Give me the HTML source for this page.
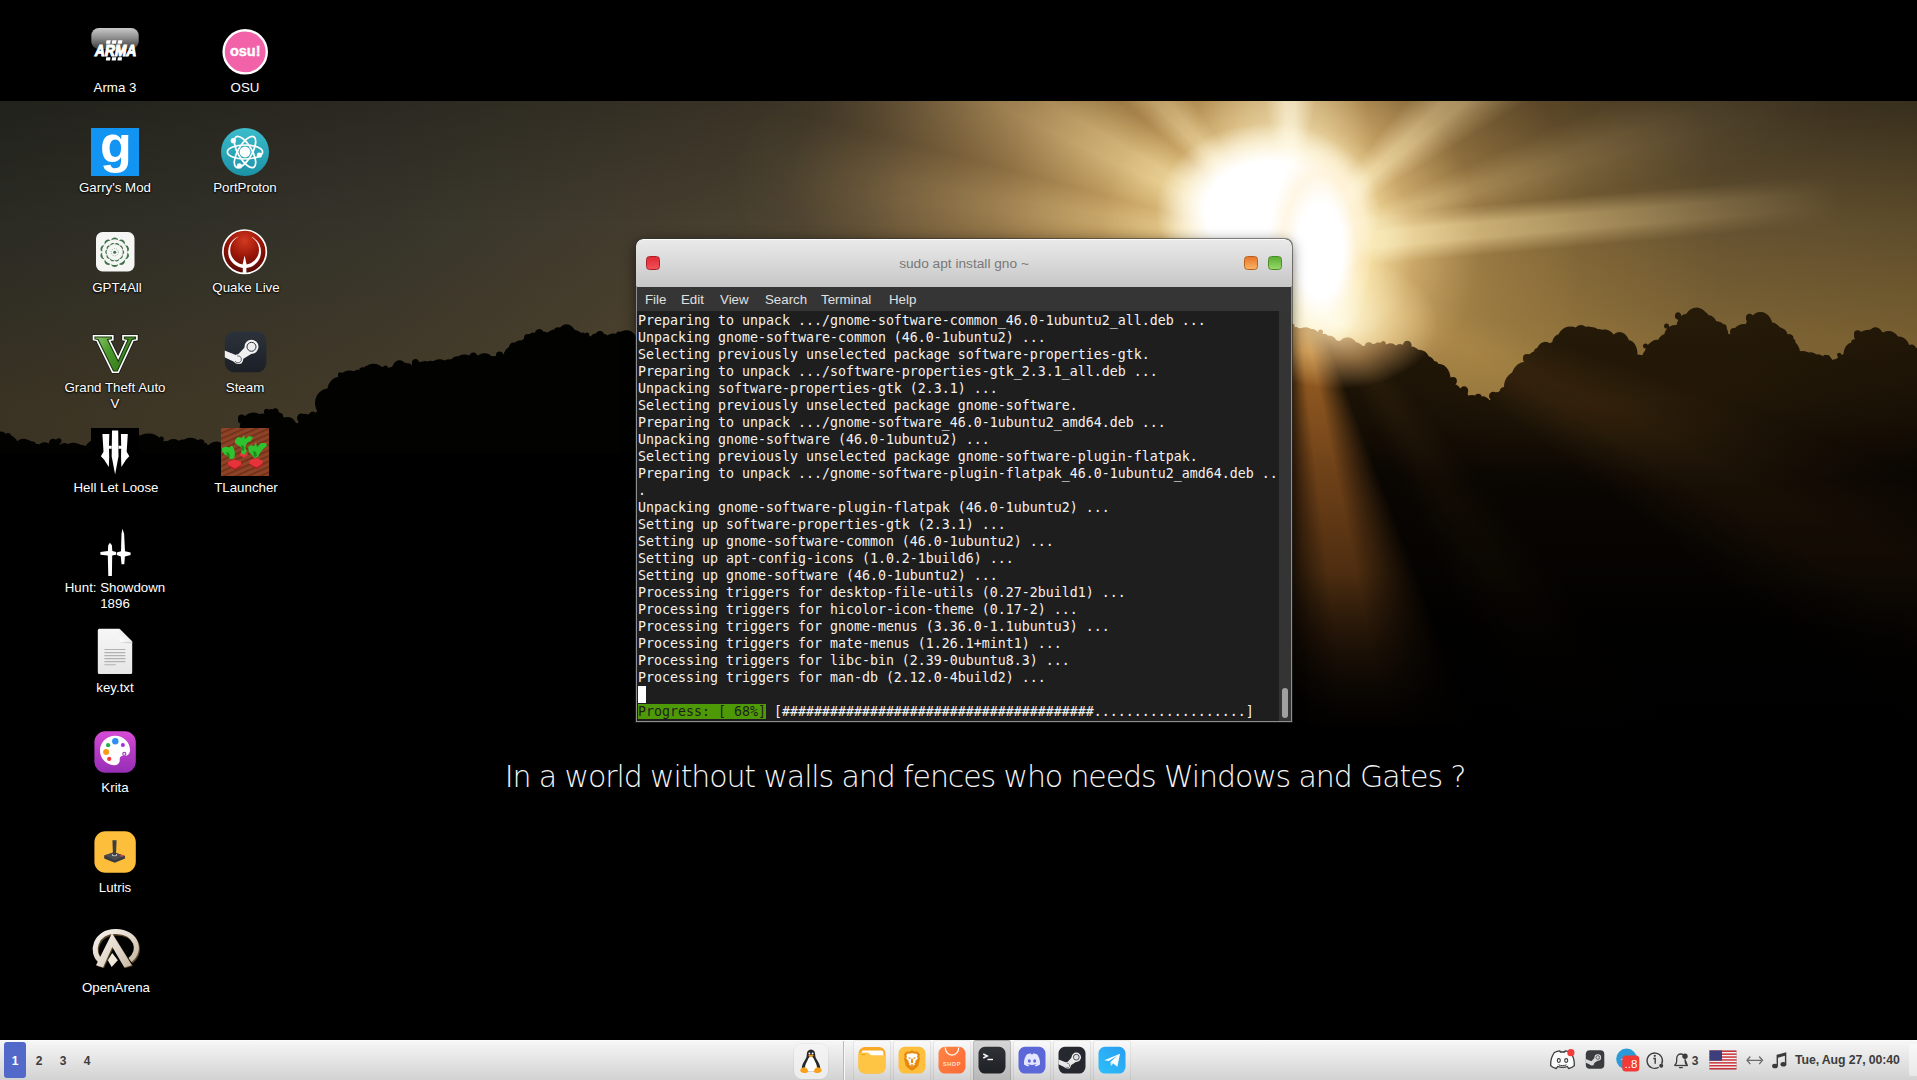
<!DOCTYPE html>
<html lang="en"><head><meta charset="utf-8"><title>Desktop</title>
<style>
*{box-sizing:border-box;margin:0;padding:0}
html,body{width:1917px;height:1080px;overflow:hidden;background:#000}
body{position:relative;font-family:"Liberation Sans","DejaVu Sans",sans-serif;color:#fff}
#photo{position:absolute;left:0;top:101px;width:1917px;height:624px;overflow:hidden;isolation:isolate}
.ly{position:absolute;left:0;top:0;width:1917px;height:624px}
.sc{mix-blend-mode:screen}
.quote{position:absolute;left:0;width:1917px;top:759px;text-align:center;font-family:"DejaVu Sans Light","DejaVu Sans","Liberation Sans",sans-serif;font-weight:200;font-size:30px;line-height:35px;color:#f4f4f4;letter-spacing:-1.11px;white-space:nowrap;padding-left:53px}
.di{position:absolute;width:130px;text-align:center;font-size:13.3px;line-height:16px;color:#fff;text-shadow:0 1px 2px #000,0 0 2px #000}
.di svg{text-shadow:none;display:block;margin:0 auto;width:48px;height:48px;overflow:visible}
.di span{display:block;margin-top:5px}
/* window */
#win{position:absolute;left:636px;top:239px;width:656px;height:483px;border-radius:7px 7px 0 0;box-shadow:0 3px 14px rgba(0,0,0,.55),0 0 0 1px rgba(60,60,60,.55);background:#1e1e1e;overflow:hidden}
#tb{position:absolute;left:0;top:0;width:656px;height:48px;background:linear-gradient(#e9e9e9,#dcdcdc 40%,#c6c6c6);border-top:1px solid #fafafa;border-radius:7px 7px 0 0;text-align:center;line-height:47px;font-size:13.7px;color:#787878}
.wb{position:absolute;top:16px;width:14px;height:14px;border-radius:3.5px}
#mb{position:absolute;left:0;top:48px;width:656px;height:24px;background:#353535;font-size:13.3px;color:#e0e0e0;line-height:26px;overflow:hidden;border-left:1px solid #555}
#mb span{position:absolute;top:0}
#term{position:absolute;left:1px;top:72px;width:642px;height:410px;background:#1e1e1e;font-family:"DejaVu Sans Mono","Liberation Mono",monospace;font-size:13.29px;line-height:17px;color:#f2f2f2;white-space:pre;padding:1px 0 0 1px;overflow:hidden}
#sb{position:absolute;left:643px;top:72px;width:12px;height:410px;background:#343434}
#sb i{position:absolute;left:3px;top:377px;width:6px;height:30px;border-radius:3px;background:#a0a0a0}
.pg{background:#4e9a06;color:#1e1e1e}
.cur{display:inline-block;width:8px;height:17px;background:#fff;vertical-align:top}
#wbd{position:absolute;left:0;top:47px;width:656px;height:436px;border:1px solid #8e8e8e;border-top:none;pointer-events:none}
/* panel */
#panel{position:absolute;left:0;top:1040px;width:1917px;height:40px;background:linear-gradient(#f6f6f6,#e6e6e6 45%,#d2d2d2);border-top:1px solid #fbfbfb}
.ws{position:absolute;top:13px;font-weight:bold;font-size:12px;color:#3c3c3c;width:24px;text-align:center;line-height:14px}
.ti{position:absolute;top:-1px;width:38px;height:41px;border:1px solid rgba(0,0,0,.07);border-bottom:none;border-radius:3px 3px 0 0;background:linear-gradient(rgba(255,255,255,.35),rgba(255,255,255,0))}
.ti svg,.tux svg{position:absolute;left:4px;top:5px;width:28px;height:28px}
.tray{position:absolute;top:-1px;height:40px}
#clock{position:absolute;left:1795px;top:11px;font-weight:bold;font-size:12.3px;color:#3c3c3c;line-height:16px;letter-spacing:-0.1px;white-space:nowrap}
</style></head><body>

<div id="photo">
<div class="ly" style="background:linear-gradient(90deg,#2b2b24 0,#36342a 20%,#473f2f 38%,#5c4b31 50%,#775a33 60%,#86663a 67%,#5e4b2b 78%,#50422a 90%,#483c25 100%)"></div>
<div class="ly" style="background:linear-gradient(180deg,rgba(0,0,0,.22) 0,rgba(0,0,0,0) 20%,rgba(150,100,30,.14) 50%)"></div>
<div class="ly sc" style="background:radial-gradient(circle at 1290px 144px,rgba(255,232,180,1) 0,rgba(255,216,146,.92) 80px,rgba(246,184,104,.62) 125px,rgba(216,148,68,.34) 190px,rgba(178,118,48,.14) 290px,rgba(160,110,50,0) 430px)"></div>
<div class="ly sc" style="background:radial-gradient(ellipse 340px 230px at 1130px 90px,rgba(240,172,88,.4) 0,rgba(214,146,66,.22) 50%,rgba(180,124,56,0) 100%)"></div>
<div class="ly sc" style="background:conic-gradient(from 270deg at 1290px 144px,rgba(0,0,0,0) 1.0deg,rgba(255,200,126,.22) 6.6deg,rgba(255,200,126,.22) 9.4deg,rgba(0,0,0,0) 15.0deg,rgba(0,0,0,0) 15.0deg,rgba(255,200,126,.5) 25.4deg,rgba(255,200,126,.5) 30.6deg,rgba(0,0,0,0) 40.0deg,rgba(0,0,0,0) 41.0deg,rgba(255,212,150,.36) 46.4deg,rgba(255,212,150,.36) 49.6deg,rgba(0,0,0,0) 56.0deg,rgba(0,0,0,0) 80.0deg,rgba(255,232,186,.6) 88.0deg,rgba(255,232,186,.6) 92.0deg,rgba(0,0,0,0) 100.0deg,rgba(0,0,0,0) 129.0deg,rgba(255,214,150,.5) 137.0deg,rgba(255,214,150,.5) 141.0deg,rgba(0,0,0,0) 149.0deg,rgba(0,0,0,0) 156.0deg,rgba(240,196,130,.24) 161.6deg,rgba(240,196,130,.24) 164.4deg,rgba(0,0,0,0) 170.0deg);-webkit-mask-image:radial-gradient(circle at 1290px 144px,#000 0,#000 120px,rgba(0,0,0,.55) 300px,transparent 560px);mask-image:radial-gradient(circle at 1290px 144px,#000 0,#000 120px,rgba(0,0,0,.55) 300px,transparent 560px)"></div>
<div class="sc" style="position:absolute;left:1322px;top:118px;width:520px;height:50px;transform-origin:0 50%;transform:rotate(-5deg);background:linear-gradient(180deg,rgba(255,224,160,0) 0,rgba(255,212,140,.6) 35%,rgba(255,212,140,.6) 65%,rgba(255,224,160,0) 100%);-webkit-mask-image:linear-gradient(90deg,transparent 0,#000 12%,rgba(0,0,0,.55) 55%,transparent 100%);mask-image:linear-gradient(90deg,transparent 0,#000 12%,rgba(0,0,0,.55) 55%,transparent 100%)"></div>
<div class="ly sc" style="background:radial-gradient(ellipse 90px 170px at 1284px 70px,rgba(255,238,196,.55) 0,rgba(255,226,170,.3) 55%,rgba(255,220,160,0) 100%)"></div>
<div class="ly" style="background:radial-gradient(ellipse 112px 88px at 1268px 110px,#fff 0,#fff 56%,rgba(255,250,232,.7) 76%,rgba(255,240,210,0) 100%)"></div>
<div class="ly" style="background:radial-gradient(ellipse 52px 106px at 1320px 150px,#fff 0,#fff 45%,rgba(255,240,210,.6) 72%,rgba(255,230,190,0) 100%)"></div>
<div class="ly sc" style="background:linear-gradient(180deg,rgba(0,0,0,0) 10px,rgba(170,120,40,.34) 235px);-webkit-mask-image:linear-gradient(90deg,transparent 1340px,#000 1560px);mask-image:linear-gradient(90deg,transparent 1340px,#000 1560px)"></div>
<svg class="ly" width="1917" height="624" viewBox="0 0 1917 624">
<defs>
<linearGradient id="treeR" gradientUnits="userSpaceOnUse" x1="0" y1="190" x2="0" y2="624">
<stop offset="0" stop-color="#2a1e0a"/><stop offset="0.16" stop-color="#1c1306"/><stop offset="0.42" stop-color="#0a0602"/><stop offset="0.8" stop-color="#020100"/>
</linearGradient>
</defs>
<path d="M0 624 L0 340 L20 345 L44 351 L46 344 L60 344 L62 352 L87 355 L120 348 L147 343 L174 348 L194 346 L220 355 L240 340 L257 321 L270 315 L284 326 L294 331 L310 322 L320 318 L326 300 L334 288 L346 280 L360 275 L380 274 L400 271 L420 268 L444 271 L460 262 L474 258 L488 264 L500 263 L510 254 L520 248 L536 240 L551 236 L570 239 L587 238 L610 241 L640 240 L700 238 L800 243 L900 238 L1000 243 L1100 238 L1200 243 L1300 238 L1300 624 ZM-13 343a8 11 0 1 1 15 0a8 11 0 1 1 -15 0zM-7 335a2.1 2.1 0 1 1 4.3 0a2.1 2.1 0 1 1 -4.3 0zM-8 337a3.1 3.1 0 1 1 6.2 0a3.1 3.1 0 1 1 -6.2 0zM-7 342a7 10 0 1 1 14 0a7 10 0 1 1 -14 0zM-8 334a4.4 4.4 0 1 1 8.7 0a4.4 4.4 0 1 1 -8.7 0zM-3 335a4.4 4.4 0 1 1 8.9 0a4.4 4.4 0 1 1 -8.9 0zM-6 346a12 13 0 1 1 24 0a12 13 0 1 1 -24 0zM-1 335a2.5 2.5 0 1 1 4.9 0a2.5 2.5 0 1 1 -4.9 0zM5 335a2.9 2.9 0 1 1 5.9 0a2.9 2.9 0 1 1 -5.9 0zM8 346a6 7 0 1 1 12 0a6 7 0 1 1 -12 0zM10 341a3.5 3.5 0 1 1 6.9 0a3.5 3.5 0 1 1 -6.9 0zM9 341a4.0 4.0 0 1 1 8.0 0a4.0 4.0 0 1 1 -8.0 0zM15 351a9 10 0 1 1 17 0a9 10 0 1 1 -17 0zM23 344a4.5 4.5 0 1 1 8.9 0a4.5 4.5 0 1 1 -8.9 0zM13 344a3.9 3.9 0 1 1 7.8 0a3.9 3.9 0 1 1 -7.8 0zM21 354a8 13 0 1 1 17 0a8 13 0 1 1 -17 0zM28 343a2.8 2.8 0 1 1 5.6 0a2.8 2.8 0 1 1 -5.6 0zM29 344a3.4 3.4 0 1 1 6.9 0a3.4 3.4 0 1 1 -6.9 0zM22 358a15 15 0 1 1 30 0a15 15 0 1 1 -30 0zM20 345a3.6 3.6 0 1 1 7.2 0a3.6 3.6 0 1 1 -7.2 0zM49 344a2.7 2.7 0 1 1 5.4 0a2.7 2.7 0 1 1 -5.4 0zM35 356a9 14 0 1 1 19 0a9 14 0 1 1 -19 0zM33 348a3.9 3.9 0 1 1 7.8 0a3.9 3.9 0 1 1 -7.8 0zM34 347a3.0 3.0 0 1 1 6.0 0a3.0 3.0 0 1 1 -6.0 0zM47 348a7 9 0 1 1 14 0a7 9 0 1 1 -14 0zM56 340a2.7 2.7 0 1 1 5.4 0a2.7 2.7 0 1 1 -5.4 0zM49 342a4.2 4.2 0 1 1 8.4 0a4.2 4.2 0 1 1 -8.4 0zM58 353a7 8 0 1 1 13 0a7 8 0 1 1 -13 0zM62 347a2.7 2.7 0 1 1 5.3 0a2.7 2.7 0 1 1 -5.3 0zM56 347a2.9 2.9 0 1 1 5.8 0a2.9 2.9 0 1 1 -5.8 0zM59 363a15 17 0 1 1 29 0a15 17 0 1 1 -29 0zM74 353a4.2 4.2 0 1 1 8.5 0a4.2 4.2 0 1 1 -8.5 0zM78 348a4.0 4.0 0 1 1 8.0 0a4.0 4.0 0 1 1 -8.0 0zM73 358a8 12 0 1 1 16 0a8 12 0 1 1 -16 0zM72 350a2.4 2.4 0 1 1 4.8 0a2.4 2.4 0 1 1 -4.8 0zM76 351a2.0 2.0 0 1 1 4.0 0a2.0 2.0 0 1 1 -4.0 0zM80 358a7 7 0 1 1 14 0a7 7 0 1 1 -14 0zM86 353a2.6 2.6 0 1 1 5.3 0a2.6 2.6 0 1 1 -5.3 0zM82 353a2.3 2.3 0 1 1 4.6 0a2.3 2.3 0 1 1 -4.6 0zM83 360a14 17 0 1 1 27 0a14 17 0 1 1 -27 0zM83 349a2.7 2.7 0 1 1 5.3 0a2.7 2.7 0 1 1 -5.3 0zM104 350a2.1 2.1 0 1 1 4.1 0a2.1 2.1 0 1 1 -4.1 0zM99 355a9 13 0 1 1 18 0a9 13 0 1 1 -18 0zM104 343a4.2 4.2 0 1 1 8.3 0a4.2 4.2 0 1 1 -8.3 0zM108 346a2.9 2.9 0 1 1 5.8 0a2.9 2.9 0 1 1 -5.8 0zM101 358a12 16 0 1 1 25 0a12 16 0 1 1 -25 0zM102 343a4.5 4.5 0 1 1 8.9 0a4.5 4.5 0 1 1 -8.9 0zM118 343a4.0 4.0 0 1 1 8.1 0a4.0 4.0 0 1 1 -8.1 0zM115 348a8 9 0 1 1 16 0a8 9 0 1 1 -16 0zM113 342a2.6 2.6 0 1 1 5.3 0a2.6 2.6 0 1 1 -5.3 0zM123 340a3.1 3.1 0 1 1 6.2 0a3.1 3.1 0 1 1 -6.2 0zM117 353a16 16 0 1 1 32 0a16 16 0 1 1 -32 0zM122 343a2.5 2.5 0 1 1 5.0 0a2.5 2.5 0 1 1 -5.0 0zM134 338a4.1 4.1 0 1 1 8.2 0a4.1 4.1 0 1 1 -8.2 0zM129 349a13 11 0 1 1 25 0a13 11 0 1 1 -25 0zM148 340a3.9 3.9 0 1 1 7.8 0a3.9 3.9 0 1 1 -7.8 0zM137 342a4.0 4.0 0 1 1 7.9 0a4.0 4.0 0 1 1 -7.9 0zM134 350a15 14 0 1 1 29 0a15 14 0 1 1 -29 0zM159 338a2.4 2.4 0 1 1 4.9 0a2.4 2.4 0 1 1 -4.9 0zM133 341a4.3 4.3 0 1 1 8.5 0a4.3 4.3 0 1 1 -8.5 0zM150 350a8 11 0 1 1 17 0a8 11 0 1 1 -17 0zM153 342a2.3 2.3 0 1 1 4.7 0a2.3 2.3 0 1 1 -4.7 0zM146 340a3.6 3.6 0 1 1 7.2 0a3.6 3.6 0 1 1 -7.2 0zM153 359a13 19 0 1 1 26 0a13 19 0 1 1 -26 0zM156 347a2.7 2.7 0 1 1 5.5 0a2.7 2.7 0 1 1 -5.5 0zM157 344a2.6 2.6 0 1 1 5.3 0a2.6 2.6 0 1 1 -5.3 0zM165 350a9 9 0 1 1 17 0a9 9 0 1 1 -17 0zM172 342a3.1 3.1 0 1 1 6.1 0a3.1 3.1 0 1 1 -6.1 0zM178 344a3.3 3.3 0 1 1 6.7 0a3.3 3.3 0 1 1 -6.7 0zM176 346a6 7 0 1 1 13 0a6 7 0 1 1 -13 0zM183 342a3.2 3.2 0 1 1 6.4 0a3.2 3.2 0 1 1 -6.4 0zM182 341a2.8 2.8 0 1 1 5.6 0a2.8 2.8 0 1 1 -5.6 0zM179 351a12 11 0 1 1 23 0a12 11 0 1 1 -23 0zM180 344a3.9 3.9 0 1 1 7.9 0a3.9 3.9 0 1 1 -7.9 0zM187 342a3.9 3.9 0 1 1 7.8 0a3.9 3.9 0 1 1 -7.8 0zM191 353a10 12 0 1 1 20 0a10 12 0 1 1 -20 0zM201 345a3.3 3.3 0 1 1 6.7 0a3.3 3.3 0 1 1 -6.7 0zM197 342a3.7 3.7 0 1 1 7.5 0a3.7 3.7 0 1 1 -7.5 0zM199 363a12 17 0 1 1 24 0a12 17 0 1 1 -24 0zM217 353a2.3 2.3 0 1 1 4.6 0a2.3 2.3 0 1 1 -4.6 0zM207 353a2.6 2.6 0 1 1 5.2 0a2.6 2.6 0 1 1 -5.2 0zM204 361a13 16 0 1 1 25 0a13 16 0 1 1 -25 0zM220 348a2.4 2.4 0 1 1 4.7 0a2.4 2.4 0 1 1 -4.7 0zM224 346a2.5 2.5 0 1 1 5.1 0a2.5 2.5 0 1 1 -5.1 0zM218 358a9 14 0 1 1 19 0a9 14 0 1 1 -19 0zM218 348a3.3 3.3 0 1 1 6.6 0a3.3 3.3 0 1 1 -6.6 0zM221 349a2.8 2.8 0 1 1 5.6 0a2.8 2.8 0 1 1 -5.6 0zM230 342a7 8 0 1 1 14 0a7 8 0 1 1 -14 0zM231 336a3.3 3.3 0 1 1 6.6 0a3.3 3.3 0 1 1 -6.6 0zM227 335a4.0 4.0 0 1 1 7.9 0a4.0 4.0 0 1 1 -7.9 0zM241 334a7 7 0 1 1 13 0a7 7 0 1 1 -13 0zM241 330a3.1 3.1 0 1 1 6.1 0a3.1 3.1 0 1 1 -6.1 0zM250 328a2.6 2.6 0 1 1 5.3 0a2.6 2.6 0 1 1 -5.3 0zM240 333a14 17 0 1 1 27 0a14 17 0 1 1 -27 0zM238 319a3.1 3.1 0 1 1 6.1 0a3.1 3.1 0 1 1 -6.1 0zM238 317a3.6 3.6 0 1 1 7.2 0a3.6 3.6 0 1 1 -7.2 0zM255 321a8 7 0 1 1 16 0a8 7 0 1 1 -16 0zM259 316a3.4 3.4 0 1 1 6.8 0a3.4 3.4 0 1 1 -6.8 0zM268 316a2.3 2.3 0 1 1 4.6 0a2.3 2.3 0 1 1 -4.6 0zM264 317a7 9 0 1 1 14 0a7 9 0 1 1 -14 0zM264 311a2.8 2.8 0 1 1 5.5 0a2.8 2.8 0 1 1 -5.5 0zM272 311a3.3 3.3 0 1 1 6.5 0a3.3 3.3 0 1 1 -6.5 0zM270 322a7 10 0 1 1 15 0a7 10 0 1 1 -15 0zM278 315a2.5 2.5 0 1 1 4.9 0a2.5 2.5 0 1 1 -4.9 0zM275 313a2.3 2.3 0 1 1 4.5 0a2.3 2.3 0 1 1 -4.5 0zM278 333a10 13 0 1 1 19 0a10 13 0 1 1 -19 0zM283 322a4.5 4.5 0 1 1 8.9 0a4.5 4.5 0 1 1 -8.9 0zM280 322a3.8 3.8 0 1 1 7.5 0a3.8 3.8 0 1 1 -7.5 0zM287 331a9 9 0 1 1 18 0a9 9 0 1 1 -18 0zM286 323a2.6 2.6 0 1 1 5.3 0a2.6 2.6 0 1 1 -5.3 0zM286 326a4.1 4.1 0 1 1 8.2 0a4.1 4.1 0 1 1 -8.2 0zM296 329a10 12 0 1 1 21 0a10 12 0 1 1 -21 0zM302 321a3.1 3.1 0 1 1 6.2 0a3.1 3.1 0 1 1 -6.2 0zM297 317a4.4 4.4 0 1 1 8.9 0a4.4 4.4 0 1 1 -8.9 0zM305 323a10 9 0 1 1 19 0a10 9 0 1 1 -19 0zM302 316a3.2 3.2 0 1 1 6.4 0a3.2 3.2 0 1 1 -6.4 0zM311 317a3.3 3.3 0 1 1 6.5 0a3.3 3.3 0 1 1 -6.5 0zM312 320a7 10 0 1 1 14 0a7 10 0 1 1 -14 0zM310 313a2.6 2.6 0 1 1 5.2 0a2.6 2.6 0 1 1 -5.2 0zM317 312a3.9 3.9 0 1 1 7.8 0a3.9 3.9 0 1 1 -7.8 0zM315 302a13 14 0 1 1 27 0a13 14 0 1 1 -27 0zM338 294a3.8 3.8 0 1 1 7.6 0a3.8 3.8 0 1 1 -7.6 0zM328 294a4.1 4.1 0 1 1 8.2 0a4.1 4.1 0 1 1 -8.2 0zM327 291a12 15 0 1 1 24 0a12 15 0 1 1 -24 0zM335 280a4.1 4.1 0 1 1 8.2 0a4.1 4.1 0 1 1 -8.2 0zM343 278a3.5 3.5 0 1 1 6.9 0a3.5 3.5 0 1 1 -6.9 0zM337 283a12 13 0 1 1 25 0a12 13 0 1 1 -25 0zM338 274a2.3 2.3 0 1 1 4.5 0a2.3 2.3 0 1 1 -4.5 0zM354 273a3.6 3.6 0 1 1 7.1 0a3.6 3.6 0 1 1 -7.1 0zM346 281a11 11 0 1 1 23 0a11 11 0 1 1 -23 0zM360 273a3.3 3.3 0 1 1 6.7 0a3.3 3.3 0 1 1 -6.7 0zM358 275a3.8 3.8 0 1 1 7.7 0a3.8 3.8 0 1 1 -7.7 0zM358 277a6 9 0 1 1 13 0a6 9 0 1 1 -13 0zM364 268a3.2 3.2 0 1 1 6.5 0a3.2 3.2 0 1 1 -6.5 0zM359 270a3.7 3.7 0 1 1 7.4 0a3.7 3.7 0 1 1 -7.4 0zM362 277a12 11 0 1 1 23 0a12 11 0 1 1 -23 0zM366 268a2.8 2.8 0 1 1 5.5 0a2.8 2.8 0 1 1 -5.5 0zM373 271a2.2 2.2 0 1 1 4.3 0a2.2 2.2 0 1 1 -4.3 0zM368 281a12 15 0 1 1 25 0a12 15 0 1 1 -25 0zM378 270a3.2 3.2 0 1 1 6.3 0a3.2 3.2 0 1 1 -6.3 0zM369 267a2.5 2.5 0 1 1 5.0 0a2.5 2.5 0 1 1 -5.0 0zM381 282a11 16 0 1 1 22 0a11 16 0 1 1 -22 0zM399 270a2.7 2.7 0 1 1 5.3 0a2.7 2.7 0 1 1 -5.3 0zM383 267a2.5 2.5 0 1 1 5.1 0a2.5 2.5 0 1 1 -5.1 0zM392 274a8 11 0 1 1 15 0a8 11 0 1 1 -15 0zM401 266a4.2 4.2 0 1 1 8.4 0a4.2 4.2 0 1 1 -8.4 0zM399 267a4.2 4.2 0 1 1 8.5 0a4.2 4.2 0 1 1 -8.5 0zM403 271a5 8 0 1 1 11 0a5 8 0 1 1 -11 0zM403 267a2.9 2.9 0 1 1 5.7 0a2.9 2.9 0 1 1 -5.7 0zM404 264a2.0 2.0 0 1 1 4.0 0a2.0 2.0 0 1 1 -4.0 0zM407 280a11 18 0 1 1 22 0a11 18 0 1 1 -22 0zM423 268a2.9 2.9 0 1 1 5.9 0a2.9 2.9 0 1 1 -5.9 0zM412 262a3.5 3.5 0 1 1 6.9 0a3.5 3.5 0 1 1 -6.9 0zM416 270a9 10 0 1 1 18 0a9 10 0 1 1 -18 0zM426 264a4.3 4.3 0 1 1 8.7 0a4.3 4.3 0 1 1 -8.7 0zM417 264a3.3 3.3 0 1 1 6.6 0a3.3 3.3 0 1 1 -6.6 0zM420 277a11 13 0 1 1 22 0a11 13 0 1 1 -22 0zM429 265a4.4 4.4 0 1 1 8.7 0a4.4 4.4 0 1 1 -8.7 0zM430 266a2.1 2.1 0 1 1 4.2 0a2.1 2.1 0 1 1 -4.2 0zM429 275a11 13 0 1 1 21 0a11 13 0 1 1 -21 0zM428 264a2.3 2.3 0 1 1 4.6 0a2.3 2.3 0 1 1 -4.6 0zM437 267a2.7 2.7 0 1 1 5.5 0a2.7 2.7 0 1 1 -5.5 0zM437 277a12 18 0 1 1 25 0a12 18 0 1 1 -25 0zM449 265a2.4 2.4 0 1 1 4.8 0a2.4 2.4 0 1 1 -4.8 0zM437 266a4.3 4.3 0 1 1 8.5 0a4.3 4.3 0 1 1 -8.5 0zM448 268a9 12 0 1 1 19 0a9 12 0 1 1 -19 0zM449 261a2.2 2.2 0 1 1 4.5 0a2.2 2.2 0 1 1 -4.5 0zM452 261a2.6 2.6 0 1 1 5.2 0a2.6 2.6 0 1 1 -5.2 0zM452 268a12 14 0 1 1 25 0a12 14 0 1 1 -25 0zM459 257a2.9 2.9 0 1 1 5.9 0a2.9 2.9 0 1 1 -5.9 0zM457 259a2.7 2.7 0 1 1 5.4 0a2.7 2.7 0 1 1 -5.4 0zM467 263a7 9 0 1 1 15 0a7 9 0 1 1 -15 0zM468 257a2.6 2.6 0 1 1 5.2 0a2.6 2.6 0 1 1 -5.2 0zM469 256a4.4 4.4 0 1 1 8.8 0a4.4 4.4 0 1 1 -8.8 0zM474 269a11 13 0 1 1 21 0a11 13 0 1 1 -21 0zM490 260a3.5 3.5 0 1 1 6.9 0a3.5 3.5 0 1 1 -6.9 0zM470 260a4.3 4.3 0 1 1 8.6 0a4.3 4.3 0 1 1 -8.6 0zM480 269a15 14 0 1 1 30 0a15 14 0 1 1 -30 0zM481 258a3.7 3.7 0 1 1 7.4 0a3.7 3.7 0 1 1 -7.4 0zM505 257a3.6 3.6 0 1 1 7.2 0a3.6 3.6 0 1 1 -7.2 0zM494 263a10 10 0 1 1 20 0a10 10 0 1 1 -20 0zM496 254a3.6 3.6 0 1 1 7.2 0a3.6 3.6 0 1 1 -7.2 0zM498 257a2.6 2.6 0 1 1 5.3 0a2.6 2.6 0 1 1 -5.3 0zM503 257a10 12 0 1 1 20 0a10 12 0 1 1 -20 0zM512 249a2.6 2.6 0 1 1 5.1 0a2.6 2.6 0 1 1 -5.1 0zM513 251a2.8 2.8 0 1 1 5.5 0a2.8 2.8 0 1 1 -5.5 0zM507 259a14 19 0 1 1 29 0a14 19 0 1 1 -29 0zM509 246a4.4 4.4 0 1 1 8.8 0a4.4 4.4 0 1 1 -8.8 0zM525 246a2.1 2.1 0 1 1 4.1 0a2.1 2.1 0 1 1 -4.1 0zM518 250a11 13 0 1 1 22 0a11 13 0 1 1 -22 0zM536 242a2.1 2.1 0 1 1 4.2 0a2.1 2.1 0 1 1 -4.2 0zM522 241a3.7 3.7 0 1 1 7.4 0a3.7 3.7 0 1 1 -7.4 0zM522 247a13 15 0 1 1 27 0a13 15 0 1 1 -27 0zM544 237a4.1 4.1 0 1 1 8.1 0a4.1 4.1 0 1 1 -8.1 0zM524 237a3.9 3.9 0 1 1 7.8 0a3.9 3.9 0 1 1 -7.8 0zM529 245a13 14 0 1 1 27 0a13 14 0 1 1 -27 0zM535 233a4.4 4.4 0 1 1 8.7 0a4.4 4.4 0 1 1 -8.7 0zM530 234a2.5 2.5 0 1 1 5.1 0a2.5 2.5 0 1 1 -5.1 0zM547 237a6 8 0 1 1 12 0a6 8 0 1 1 -12 0zM554 230a3.8 3.8 0 1 1 7.7 0a3.8 3.8 0 1 1 -7.7 0zM556 230a2.8 2.8 0 1 1 5.6 0a2.8 2.8 0 1 1 -5.6 0zM544 244a15 13 0 1 1 29 0a15 13 0 1 1 -29 0zM553 235a2.8 2.8 0 1 1 5.7 0a2.8 2.8 0 1 1 -5.7 0zM547 237a2.7 2.7 0 1 1 5.4 0a2.7 2.7 0 1 1 -5.4 0zM555 249a12 20 0 1 1 23 0a12 20 0 1 1 -23 0zM559 232a4.1 4.1 0 1 1 8.1 0a4.1 4.1 0 1 1 -8.1 0zM561 238a3.2 3.2 0 1 1 6.4 0a3.2 3.2 0 1 1 -6.4 0zM562 248a12 15 0 1 1 23 0a12 15 0 1 1 -23 0zM558 237a4.0 4.0 0 1 1 8.1 0a4.0 4.0 0 1 1 -8.1 0zM578 240a2.1 2.1 0 1 1 4.2 0a2.1 2.1 0 1 1 -4.2 0zM567 250a12 18 0 1 1 24 0a12 18 0 1 1 -24 0zM570 238a4.4 4.4 0 1 1 8.8 0a4.4 4.4 0 1 1 -8.8 0zM578 239a3.8 3.8 0 1 1 7.6 0a3.8 3.8 0 1 1 -7.6 0zM579 244a7 11 0 1 1 14 0a7 11 0 1 1 -14 0zM585 234a2.1 2.1 0 1 1 4.1 0a2.1 2.1 0 1 1 -4.1 0zM578 236a4.4 4.4 0 1 1 8.8 0a4.4 4.4 0 1 1 -8.8 0zM588 244a8 11 0 1 1 17 0a8 11 0 1 1 -17 0zM600 237a4.0 4.0 0 1 1 8.0 0a4.0 4.0 0 1 1 -8.0 0zM596 234a3.9 3.9 0 1 1 7.9 0a3.9 3.9 0 1 1 -7.9 0zM597 245a8 10 0 1 1 17 0a8 10 0 1 1 -17 0zM594 239a3.9 3.9 0 1 1 7.8 0a3.9 3.9 0 1 1 -7.8 0zM599 239a2.1 2.1 0 1 1 4.2 0a2.1 2.1 0 1 1 -4.2 0zM603 248a11 12 0 1 1 21 0a11 12 0 1 1 -21 0zM606 241a2.2 2.2 0 1 1 4.5 0a2.2 2.2 0 1 1 -4.5 0zM610 238a3.1 3.1 0 1 1 6.2 0a3.1 3.1 0 1 1 -6.2 0zM610 247a10 12 0 1 1 20 0a10 12 0 1 1 -20 0zM624 237a2.3 2.3 0 1 1 4.6 0a2.3 2.3 0 1 1 -4.6 0zM623 239a3.4 3.4 0 1 1 6.8 0a3.4 3.4 0 1 1 -6.8 0zM616 246a11 13 0 1 1 21 0a11 13 0 1 1 -21 0zM616 234a3.4 3.4 0 1 1 6.9 0a3.4 3.4 0 1 1 -6.9 0zM619 236a4.5 4.5 0 1 1 9.0 0a4.5 4.5 0 1 1 -9.0 0zM626 246a9 11 0 1 1 18 0a9 11 0 1 1 -18 0zM624 238a4.0 4.0 0 1 1 8.1 0a4.0 4.0 0 1 1 -8.1 0zM639 236a2.1 2.1 0 1 1 4.2 0a2.1 2.1 0 1 1 -4.2 0zM635 244a6 11 0 1 1 13 0a6 11 0 1 1 -13 0zM643 237a4.2 4.2 0 1 1 8.3 0a4.2 4.2 0 1 1 -8.3 0zM637 237a3.9 3.9 0 1 1 7.9 0a3.9 3.9 0 1 1 -7.9 0zM645 241a8 9 0 1 1 15 0a8 9 0 1 1 -15 0zM648 236a2.5 2.5 0 1 1 5.0 0a2.5 2.5 0 1 1 -5.0 0zM645 234a3.6 3.6 0 1 1 7.3 0a3.6 3.6 0 1 1 -7.3 0zM653 240a6 9 0 1 1 12 0a6 9 0 1 1 -12 0zM652 235a4.0 4.0 0 1 1 8.0 0a4.0 4.0 0 1 1 -8.0 0zM657 235a2.3 2.3 0 1 1 4.5 0a2.3 2.3 0 1 1 -4.5 0zM655 242a11 11 0 1 1 22 0a11 11 0 1 1 -22 0zM668 234a2.7 2.7 0 1 1 5.4 0a2.7 2.7 0 1 1 -5.4 0zM659 232a2.8 2.8 0 1 1 5.6 0a2.8 2.8 0 1 1 -5.6 0zM666 247a9 13 0 1 1 18 0a9 13 0 1 1 -18 0zM668 239a3.8 3.8 0 1 1 7.6 0a3.8 3.8 0 1 1 -7.6 0zM665 240a4.3 4.3 0 1 1 8.5 0a4.3 4.3 0 1 1 -8.5 0zM670 248a12 18 0 1 1 24 0a12 18 0 1 1 -24 0zM670 239a3.4 3.4 0 1 1 6.8 0a3.4 3.4 0 1 1 -6.8 0zM683 232a2.2 2.2 0 1 1 4.4 0a2.2 2.2 0 1 1 -4.4 0zM681 241a9 10 0 1 1 18 0a9 10 0 1 1 -18 0zM689 232a2.3 2.3 0 1 1 4.5 0a2.3 2.3 0 1 1 -4.5 0zM686 232a4.4 4.4 0 1 1 8.8 0a4.4 4.4 0 1 1 -8.8 0zM688 242a9 11 0 1 1 17 0a9 11 0 1 1 -17 0zM686 232a3.0 3.0 0 1 1 5.9 0a3.0 3.0 0 1 1 -5.9 0zM700 234a4.1 4.1 0 1 1 8.1 0a4.1 4.1 0 1 1 -8.1 0zM692 247a11 14 0 1 1 22 0a11 14 0 1 1 -22 0zM708 238a2.5 2.5 0 1 1 5.1 0a2.5 2.5 0 1 1 -5.1 0zM698 236a3.0 3.0 0 1 1 5.9 0a3.0 3.0 0 1 1 -5.9 0zM700 242a9 12 0 1 1 18 0a9 12 0 1 1 -18 0zM708 232a2.1 2.1 0 1 1 4.2 0a2.1 2.1 0 1 1 -4.2 0zM711 235a3.5 3.5 0 1 1 7.0 0a3.5 3.5 0 1 1 -7.0 0zM707 245a10 13 0 1 1 21 0a10 13 0 1 1 -21 0zM712 235a3.1 3.1 0 1 1 6.2 0a3.1 3.1 0 1 1 -6.2 0zM712 238a3.5 3.5 0 1 1 7.1 0a3.5 3.5 0 1 1 -7.1 0zM716 244a9 11 0 1 1 18 0a9 11 0 1 1 -18 0zM717 235a2.3 2.3 0 1 1 4.5 0a2.3 2.3 0 1 1 -4.5 0zM716 235a2.2 2.2 0 1 1 4.5 0a2.2 2.2 0 1 1 -4.5 0zM724 244a8 13 0 1 1 17 0a8 13 0 1 1 -17 0zM733 233a3.3 3.3 0 1 1 6.6 0a3.3 3.3 0 1 1 -6.6 0zM722 234a2.9 2.9 0 1 1 5.9 0a2.9 2.9 0 1 1 -5.9 0zM735 245a8 11 0 1 1 17 0a8 11 0 1 1 -17 0zM744 239a4.5 4.5 0 1 1 8.9 0a4.5 4.5 0 1 1 -8.9 0zM739 235a4.3 4.3 0 1 1 8.6 0a4.3 4.3 0 1 1 -8.6 0zM735 245a14 12 0 1 1 29 0a14 12 0 1 1 -29 0zM752 238a4.2 4.2 0 1 1 8.5 0a4.2 4.2 0 1 1 -8.5 0zM740 235a2.4 2.4 0 1 1 4.7 0a2.4 2.4 0 1 1 -4.7 0zM745 248a12 15 0 1 1 24 0a12 15 0 1 1 -24 0zM750 240a2.5 2.5 0 1 1 4.9 0a2.5 2.5 0 1 1 -4.9 0zM746 235a3.7 3.7 0 1 1 7.4 0a3.7 3.7 0 1 1 -7.4 0zM759 243a9 8 0 1 1 17 0a9 8 0 1 1 -17 0zM766 238a4.2 4.2 0 1 1 8.4 0a4.2 4.2 0 1 1 -8.4 0zM764 237a4.2 4.2 0 1 1 8.4 0a4.2 4.2 0 1 1 -8.4 0zM759 252a15 16 0 1 1 29 0a15 16 0 1 1 -29 0zM763 236a3.4 3.4 0 1 1 6.9 0a3.4 3.4 0 1 1 -6.9 0zM766 238a3.1 3.1 0 1 1 6.2 0a3.1 3.1 0 1 1 -6.2 0zM769 250a10 16 0 1 1 20 0a10 16 0 1 1 -20 0zM779 234a3.5 3.5 0 1 1 6.9 0a3.5 3.5 0 1 1 -6.9 0zM781 239a2.0 2.0 0 1 1 4.0 0a2.0 2.0 0 1 1 -4.0 0zM777 245a8 9 0 1 1 16 0a8 9 0 1 1 -16 0zM788 239a2.6 2.6 0 1 1 5.1 0a2.6 2.6 0 1 1 -5.1 0zM785 240a2.0 2.0 0 1 1 4.0 0a2.0 2.0 0 1 1 -4.0 0zM785 245a7 8 0 1 1 14 0a7 8 0 1 1 -14 0zM789 240a3.6 3.6 0 1 1 7.1 0a3.6 3.6 0 1 1 -7.1 0zM787 240a4.3 4.3 0 1 1 8.7 0a4.3 4.3 0 1 1 -8.7 0zM792 248a6 10 0 1 1 13 0a6 10 0 1 1 -13 0zM799 241a2.7 2.7 0 1 1 5.3 0a2.7 2.7 0 1 1 -5.3 0zM788 240a3.4 3.4 0 1 1 6.8 0a3.4 3.4 0 1 1 -6.8 0zM794 252a11 16 0 1 1 22 0a11 16 0 1 1 -22 0zM798 238a2.1 2.1 0 1 1 4.2 0a2.1 2.1 0 1 1 -4.2 0zM803 241a2.6 2.6 0 1 1 5.2 0a2.6 2.6 0 1 1 -5.2 0zM801 252a10 15 0 1 1 20 0a10 15 0 1 1 -20 0zM800 243a3.5 3.5 0 1 1 7.0 0a3.5 3.5 0 1 1 -7.0 0zM807 240a4.0 4.0 0 1 1 8.1 0a4.0 4.0 0 1 1 -8.1 0zM808 246a8 9 0 1 1 16 0a8 9 0 1 1 -16 0zM819 239a2.0 2.0 0 1 1 4.0 0a2.0 2.0 0 1 1 -4.0 0zM819 239a3.2 3.2 0 1 1 6.3 0a3.2 3.2 0 1 1 -6.3 0zM817 244a9 10 0 1 1 18 0a9 10 0 1 1 -18 0zM814 237a3.9 3.9 0 1 1 7.7 0a3.9 3.9 0 1 1 -7.7 0zM826 235a3.8 3.8 0 1 1 7.6 0a3.8 3.8 0 1 1 -7.6 0zM822 249a10 14 0 1 1 21 0a10 14 0 1 1 -21 0zM823 237a4.4 4.4 0 1 1 8.8 0a4.4 4.4 0 1 1 -8.8 0zM825 236a2.0 2.0 0 1 1 4.1 0a2.0 2.0 0 1 1 -4.1 0zM830 247a9 12 0 1 1 18 0a9 12 0 1 1 -18 0zM833 236a2.8 2.8 0 1 1 5.6 0a2.8 2.8 0 1 1 -5.6 0zM831 236a3.6 3.6 0 1 1 7.2 0a3.6 3.6 0 1 1 -7.2 0zM835 249a13 14 0 1 1 27 0a13 14 0 1 1 -27 0zM851 236a3.1 3.1 0 1 1 6.2 0a3.1 3.1 0 1 1 -6.2 0zM852 238a2.8 2.8 0 1 1 5.5 0a2.8 2.8 0 1 1 -5.5 0zM845 247a9 16 0 1 1 19 0a9 16 0 1 1 -19 0zM841 238a4.3 4.3 0 1 1 8.6 0a4.3 4.3 0 1 1 -8.6 0zM850 238a2.1 2.1 0 1 1 4.1 0a2.1 2.1 0 1 1 -4.1 0zM848 249a12 15 0 1 1 24 0a12 15 0 1 1 -24 0zM846 237a2.9 2.9 0 1 1 5.8 0a2.9 2.9 0 1 1 -5.8 0zM863 236a4.2 4.2 0 1 1 8.5 0a4.2 4.2 0 1 1 -8.5 0zM850 249a15 18 0 1 1 30 0a15 18 0 1 1 -30 0zM854 238a2.1 2.1 0 1 1 4.2 0a2.1 2.1 0 1 1 -4.2 0zM872 233a3.6 3.6 0 1 1 7.2 0a3.6 3.6 0 1 1 -7.2 0zM865 242a10 11 0 1 1 21 0a10 11 0 1 1 -21 0zM878 235a2.8 2.8 0 1 1 5.6 0a2.8 2.8 0 1 1 -5.6 0zM871 236a2.6 2.6 0 1 1 5.3 0a2.6 2.6 0 1 1 -5.3 0zM871 247a11 13 0 1 1 22 0a11 13 0 1 1 -22 0zM878 235a3.5 3.5 0 1 1 7.1 0a3.5 3.5 0 1 1 -7.1 0zM868 238a3.1 3.1 0 1 1 6.2 0a3.1 3.1 0 1 1 -6.2 0zM882 242a10 11 0 1 1 19 0a10 11 0 1 1 -19 0zM895 235a4.0 4.0 0 1 1 8.1 0a4.0 4.0 0 1 1 -8.1 0zM883 236a2.5 2.5 0 1 1 5.0 0a2.5 2.5 0 1 1 -5.0 0zM890 247a11 17 0 1 1 22 0a11 17 0 1 1 -22 0zM904 237a3.2 3.2 0 1 1 6.5 0a3.2 3.2 0 1 1 -6.5 0zM895 232a2.7 2.7 0 1 1 5.3 0a2.7 2.7 0 1 1 -5.3 0zM904 243a8 11 0 1 1 15 0a8 11 0 1 1 -15 0zM904 234a2.2 2.2 0 1 1 4.4 0a2.2 2.2 0 1 1 -4.4 0zM912 234a4.0 4.0 0 1 1 7.9 0a4.0 4.0 0 1 1 -7.9 0zM912 245a9 11 0 1 1 18 0a9 11 0 1 1 -18 0zM911 235a2.1 2.1 0 1 1 4.1 0a2.1 2.1 0 1 1 -4.1 0zM911 238a4.3 4.3 0 1 1 8.5 0a4.3 4.3 0 1 1 -8.5 0zM918 243a11 10 0 1 1 21 0a11 10 0 1 1 -21 0zM925 234a3.9 3.9 0 1 1 7.8 0a3.9 3.9 0 1 1 -7.8 0zM929 236a2.8 2.8 0 1 1 5.6 0a2.8 2.8 0 1 1 -5.6 0zM921 248a13 17 0 1 1 27 0a13 17 0 1 1 -27 0zM929 233a3.4 3.4 0 1 1 6.9 0a3.4 3.4 0 1 1 -6.9 0zM920 235a4.2 4.2 0 1 1 8.4 0a4.2 4.2 0 1 1 -8.4 0zM934 245a7 10 0 1 1 15 0a7 10 0 1 1 -15 0zM933 239a2.6 2.6 0 1 1 5.2 0a2.6 2.6 0 1 1 -5.2 0zM936 237a2.4 2.4 0 1 1 4.8 0a2.4 2.4 0 1 1 -4.8 0zM939 243a9 10 0 1 1 19 0a9 10 0 1 1 -19 0zM954 237a3.0 3.0 0 1 1 5.9 0a3.0 3.0 0 1 1 -5.9 0zM953 234a3.8 3.8 0 1 1 7.7 0a3.8 3.8 0 1 1 -7.7 0zM947 242a8 8 0 1 1 17 0a8 8 0 1 1 -17 0zM951 237a3.0 3.0 0 1 1 6.0 0a3.0 3.0 0 1 1 -6.0 0zM957 235a3.3 3.3 0 1 1 6.5 0a3.3 3.3 0 1 1 -6.5 0zM956 246a9 13 0 1 1 17 0a9 13 0 1 1 -17 0zM965 235a3.1 3.1 0 1 1 6.2 0a3.1 3.1 0 1 1 -6.2 0zM962 236a3.1 3.1 0 1 1 6.1 0a3.1 3.1 0 1 1 -6.1 0zM957 251a14 16 0 1 1 27 0a14 16 0 1 1 -27 0zM977 238a3.6 3.6 0 1 1 7.2 0a3.6 3.6 0 1 1 -7.2 0zM966 240a3.6 3.6 0 1 1 7.1 0a3.6 3.6 0 1 1 -7.1 0zM966 248a11 13 0 1 1 21 0a11 13 0 1 1 -21 0zM968 239a3.1 3.1 0 1 1 6.3 0a3.1 3.1 0 1 1 -6.3 0zM975 239a3.7 3.7 0 1 1 7.4 0a3.7 3.7 0 1 1 -7.4 0zM979 246a8 11 0 1 1 17 0a8 11 0 1 1 -17 0zM985 236a2.1 2.1 0 1 1 4.2 0a2.1 2.1 0 1 1 -4.2 0zM984 239a4.0 4.0 0 1 1 7.9 0a4.0 4.0 0 1 1 -7.9 0zM989 249a9 13 0 1 1 18 0a9 13 0 1 1 -18 0zM998 239a3.6 3.6 0 1 1 7.2 0a3.6 3.6 0 1 1 -7.2 0zM1000 239a3.0 3.0 0 1 1 6.1 0a3.0 3.0 0 1 1 -6.1 0zM1000 247a9 9 0 1 1 17 0a9 9 0 1 1 -17 0zM999 238a2.9 2.9 0 1 1 5.8 0a2.9 2.9 0 1 1 -5.8 0zM998 240a3.0 3.0 0 1 1 6.0 0a3.0 3.0 0 1 1 -6.0 0zM1004 247a9 13 0 1 1 19 0a9 13 0 1 1 -19 0zM1005 239a3.9 3.9 0 1 1 7.7 0a3.9 3.9 0 1 1 -7.7 0zM1019 238a2.5 2.5 0 1 1 5.1 0a2.5 2.5 0 1 1 -5.1 0zM1015 246a8 10 0 1 1 17 0a8 10 0 1 1 -17 0zM1025 238a3.2 3.2 0 1 1 6.3 0a3.2 3.2 0 1 1 -6.3 0zM1020 240a4.4 4.4 0 1 1 8.8 0a4.4 4.4 0 1 1 -8.8 0zM1018 249a13 15 0 1 1 25 0a13 15 0 1 1 -25 0zM1023 238a2.3 2.3 0 1 1 4.6 0a2.3 2.3 0 1 1 -4.6 0zM1034 239a4.1 4.1 0 1 1 8.3 0a4.1 4.1 0 1 1 -8.3 0zM1028 244a8 11 0 1 1 17 0a8 11 0 1 1 -17 0zM1026 235a2.7 2.7 0 1 1 5.4 0a2.7 2.7 0 1 1 -5.4 0zM1029 237a3.2 3.2 0 1 1 6.4 0a3.2 3.2 0 1 1 -6.4 0zM1032 248a12 13 0 1 1 24 0a12 13 0 1 1 -24 0zM1049 241a4.1 4.1 0 1 1 8.1 0a4.1 4.1 0 1 1 -8.1 0zM1052 237a2.4 2.4 0 1 1 4.7 0a2.4 2.4 0 1 1 -4.7 0zM1045 246a9 11 0 1 1 18 0a9 11 0 1 1 -18 0zM1055 239a2.3 2.3 0 1 1 4.5 0a2.3 2.3 0 1 1 -4.5 0zM1044 239a3.9 3.9 0 1 1 7.9 0a3.9 3.9 0 1 1 -7.9 0zM1053 242a9 10 0 1 1 18 0a9 10 0 1 1 -18 0zM1064 234a4.0 4.0 0 1 1 7.9 0a4.0 4.0 0 1 1 -7.9 0zM1060 233a4.0 4.0 0 1 1 7.9 0a4.0 4.0 0 1 1 -7.9 0zM1063 244a9 10 0 1 1 17 0a9 10 0 1 1 -17 0zM1067 235a3.4 3.4 0 1 1 6.8 0a3.4 3.4 0 1 1 -6.8 0zM1065 237a2.3 2.3 0 1 1 4.7 0a2.3 2.3 0 1 1 -4.7 0zM1073 240a7 7 0 1 1 14 0a7 7 0 1 1 -14 0zM1075 235a4.2 4.2 0 1 1 8.3 0a4.2 4.2 0 1 1 -8.3 0zM1069 234a3.2 3.2 0 1 1 6.3 0a3.2 3.2 0 1 1 -6.3 0zM1075 244a13 13 0 1 1 26 0a13 13 0 1 1 -26 0zM1096 237a3.6 3.6 0 1 1 7.2 0a3.6 3.6 0 1 1 -7.2 0zM1088 237a3.5 3.5 0 1 1 7.0 0a3.5 3.5 0 1 1 -7.0 0zM1084 250a13 19 0 1 1 25 0a13 19 0 1 1 -25 0zM1094 232a2.1 2.1 0 1 1 4.2 0a2.1 2.1 0 1 1 -4.2 0zM1099 234a2.8 2.8 0 1 1 5.7 0a2.8 2.8 0 1 1 -5.7 0zM1098 244a9 11 0 1 1 18 0a9 11 0 1 1 -18 0zM1099 236a3.1 3.1 0 1 1 6.1 0a3.1 3.1 0 1 1 -6.1 0zM1105 234a2.7 2.7 0 1 1 5.5 0a2.7 2.7 0 1 1 -5.5 0zM1108 243a9 10 0 1 1 19 0a9 10 0 1 1 -19 0zM1122 234a4.0 4.0 0 1 1 8.0 0a4.0 4.0 0 1 1 -8.0 0zM1111 236a2.7 2.7 0 1 1 5.5 0a2.7 2.7 0 1 1 -5.5 0zM1113 245a12 11 0 1 1 25 0a12 11 0 1 1 -25 0zM1133 236a2.1 2.1 0 1 1 4.2 0a2.1 2.1 0 1 1 -4.2 0zM1118 238a2.5 2.5 0 1 1 4.9 0a2.5 2.5 0 1 1 -4.9 0zM1124 249a12 15 0 1 1 23 0a12 15 0 1 1 -23 0zM1135 237a3.6 3.6 0 1 1 7.1 0a3.6 3.6 0 1 1 -7.1 0zM1137 237a3.7 3.7 0 1 1 7.4 0a3.7 3.7 0 1 1 -7.4 0zM1131 247a11 15 0 1 1 22 0a11 15 0 1 1 -22 0zM1131 238a3.9 3.9 0 1 1 7.9 0a3.9 3.9 0 1 1 -7.9 0zM1149 234a2.9 2.9 0 1 1 5.8 0a2.9 2.9 0 1 1 -5.8 0zM1140 246a13 14 0 1 1 25 0a13 14 0 1 1 -25 0zM1147 237a3.1 3.1 0 1 1 6.2 0a3.1 3.1 0 1 1 -6.2 0zM1154 234a2.1 2.1 0 1 1 4.3 0a2.1 2.1 0 1 1 -4.3 0zM1155 244a6 9 0 1 1 12 0a6 9 0 1 1 -12 0zM1163 237a2.0 2.0 0 1 1 4.1 0a2.0 2.0 0 1 1 -4.1 0zM1155 237a4.3 4.3 0 1 1 8.7 0a4.3 4.3 0 1 1 -8.7 0zM1162 246a10 10 0 1 1 19 0a10 10 0 1 1 -19 0zM1164 240a2.0 2.0 0 1 1 4.1 0a2.0 2.0 0 1 1 -4.1 0zM1160 237a2.3 2.3 0 1 1 4.6 0a2.3 2.3 0 1 1 -4.6 0zM1174 241a8 7 0 1 1 16 0a8 7 0 1 1 -16 0zM1182 237a3.8 3.8 0 1 1 7.7 0a3.8 3.8 0 1 1 -7.7 0zM1173 237a3.9 3.9 0 1 1 7.9 0a3.9 3.9 0 1 1 -7.9 0zM1178 249a14 13 0 1 1 28 0a14 13 0 1 1 -28 0zM1193 240a4.3 4.3 0 1 1 8.7 0a4.3 4.3 0 1 1 -8.7 0zM1181 237a3.8 3.8 0 1 1 7.6 0a3.8 3.8 0 1 1 -7.6 0zM1190 244a7 9 0 1 1 14 0a7 9 0 1 1 -14 0zM1192 236a2.4 2.4 0 1 1 4.8 0a2.4 2.4 0 1 1 -4.8 0zM1200 237a2.1 2.1 0 1 1 4.3 0a2.1 2.1 0 1 1 -4.3 0zM1193 248a10 14 0 1 1 21 0a10 14 0 1 1 -21 0zM1207 239a3.6 3.6 0 1 1 7.2 0a3.6 3.6 0 1 1 -7.2 0zM1204 238a3.0 3.0 0 1 1 5.9 0a3.0 3.0 0 1 1 -5.9 0zM1199 251a15 17 0 1 1 30 0a15 17 0 1 1 -30 0zM1197 235a3.8 3.8 0 1 1 7.5 0a3.8 3.8 0 1 1 -7.5 0zM1220 239a3.5 3.5 0 1 1 7.0 0a3.5 3.5 0 1 1 -7.0 0zM1211 249a13 14 0 1 1 26 0a13 14 0 1 1 -26 0zM1231 239a3.7 3.7 0 1 1 7.4 0a3.7 3.7 0 1 1 -7.4 0zM1223 236a4.0 4.0 0 1 1 8.0 0a4.0 4.0 0 1 1 -8.0 0zM1225 243a6 8 0 1 1 12 0a6 8 0 1 1 -12 0zM1233 236a2.1 2.1 0 1 1 4.2 0a2.1 2.1 0 1 1 -4.2 0zM1231 237a4.2 4.2 0 1 1 8.3 0a4.2 4.2 0 1 1 -8.3 0zM1230 247a10 12 0 1 1 19 0a10 12 0 1 1 -19 0zM1245 239a2.2 2.2 0 1 1 4.4 0a2.2 2.2 0 1 1 -4.4 0zM1238 237a2.5 2.5 0 1 1 5.0 0a2.5 2.5 0 1 1 -5.0 0zM1237 251a12 17 0 1 1 24 0a12 17 0 1 1 -24 0zM1246 240a2.6 2.6 0 1 1 5.3 0a2.6 2.6 0 1 1 -5.3 0zM1252 236a3.1 3.1 0 1 1 6.3 0a3.1 3.1 0 1 1 -6.3 0zM1241 247a14 14 0 1 1 27 0a14 14 0 1 1 -27 0zM1262 235a3.3 3.3 0 1 1 6.6 0a3.3 3.3 0 1 1 -6.6 0zM1252 236a2.5 2.5 0 1 1 4.9 0a2.5 2.5 0 1 1 -4.9 0zM1252 243a8 9 0 1 1 17 0a8 9 0 1 1 -17 0zM1257 236a2.4 2.4 0 1 1 4.7 0a2.4 2.4 0 1 1 -4.7 0zM1250 234a2.9 2.9 0 1 1 5.9 0a2.9 2.9 0 1 1 -5.9 0zM1254 245a12 12 0 1 1 25 0a12 12 0 1 1 -25 0zM1261 236a2.1 2.1 0 1 1 4.1 0a2.1 2.1 0 1 1 -4.1 0zM1251 234a4.2 4.2 0 1 1 8.3 0a4.2 4.2 0 1 1 -8.3 0zM1265 246a10 14 0 1 1 19 0a10 14 0 1 1 -19 0zM1279 234a4.0 4.0 0 1 1 8.1 0a4.0 4.0 0 1 1 -8.1 0zM1281 237a2.1 2.1 0 1 1 4.2 0a2.1 2.1 0 1 1 -4.2 0zM1274 241a7 8 0 1 1 13 0a7 8 0 1 1 -13 0zM1281 235a4.4 4.4 0 1 1 8.7 0a4.4 4.4 0 1 1 -8.7 0zM1282 236a3.5 3.5 0 1 1 7.0 0a3.5 3.5 0 1 1 -7.0 0zM1279 241a9 8 0 1 1 17 0a9 8 0 1 1 -17 0zM1287 233a3.7 3.7 0 1 1 7.3 0a3.7 3.7 0 1 1 -7.3 0zM1284 235a2.4 2.4 0 1 1 4.8 0a2.4 2.4 0 1 1 -4.8 0zM1286 244a12 14 0 1 1 25 0a12 14 0 1 1 -25 0zM1291 231a4.3 4.3 0 1 1 8.5 0a4.3 4.3 0 1 1 -8.5 0zM1303 236a4.0 4.0 0 1 1 7.9 0a4.0 4.0 0 1 1 -7.9 0z" fill="#020201"/>
<path d="M1280 624 L1280 226 L1292 231 L1330 243 L1363 251 L1395 248 L1420 258 L1440 276 L1453 291 L1475 300 L1493 305 L1503 293 L1513 285 L1530 266 L1547 251 L1565 238 L1580 231 L1600 236 L1623 245 L1635 258 L1647 265 L1660 246 L1673 231 L1688 220 L1703 216 L1716 230 L1727 245 L1742 230 L1760 221 L1780 238 L1800 255 L1820 261 L1840 265 L1858 248 L1873 235 L1895 246 L1917 258 L1917 624 ZM1262 229a13 11 0 1 1 27 0a13 11 0 1 1 -27 0zM1278 219a3.7 3.7 0 1 1 7.4 0a3.7 3.7 0 1 1 -7.4 0zM1266 220a3.9 3.9 0 1 1 7.8 0a3.9 3.9 0 1 1 -7.8 0zM1273 229a8 9 0 1 1 16 0a8 9 0 1 1 -16 0zM1273 223a2.4 2.4 0 1 1 4.7 0a2.4 2.4 0 1 1 -4.7 0zM1280 224a3.8 3.8 0 1 1 7.6 0a3.8 3.8 0 1 1 -7.6 0zM1279 232a8 7 0 1 1 16 0a8 7 0 1 1 -16 0zM1290 225a2.3 2.3 0 1 1 4.7 0a2.3 2.3 0 1 1 -4.7 0zM1282 227a4.3 4.3 0 1 1 8.6 0a4.3 4.3 0 1 1 -8.6 0zM1286 240a11 13 0 1 1 22 0a11 13 0 1 1 -22 0zM1294 229a2.4 2.4 0 1 1 4.7 0a2.4 2.4 0 1 1 -4.7 0zM1287 232a3.8 3.8 0 1 1 7.6 0a3.8 3.8 0 1 1 -7.6 0zM1297 237a9 8 0 1 1 17 0a9 8 0 1 1 -17 0zM1295 231a4.1 4.1 0 1 1 8.2 0a4.1 4.1 0 1 1 -8.2 0zM1299 232a3.2 3.2 0 1 1 6.5 0a3.2 3.2 0 1 1 -6.5 0zM1301 247a11 19 0 1 1 22 0a11 19 0 1 1 -22 0zM1318 231a2.5 2.5 0 1 1 5.1 0a2.5 2.5 0 1 1 -5.1 0zM1309 234a2.6 2.6 0 1 1 5.3 0a2.6 2.6 0 1 1 -5.3 0zM1307 247a11 13 0 1 1 22 0a11 13 0 1 1 -22 0zM1305 238a4.2 4.2 0 1 1 8.5 0a4.2 4.2 0 1 1 -8.5 0zM1306 236a2.7 2.7 0 1 1 5.5 0a2.7 2.7 0 1 1 -5.5 0zM1322 243a7 8 0 1 1 15 0a7 8 0 1 1 -15 0zM1319 236a3.3 3.3 0 1 1 6.6 0a3.3 3.3 0 1 1 -6.6 0zM1320 237a4.3 4.3 0 1 1 8.6 0a4.3 4.3 0 1 1 -8.6 0zM1326 250a9 11 0 1 1 18 0a9 11 0 1 1 -18 0zM1337 243a2.2 2.2 0 1 1 4.4 0a2.2 2.2 0 1 1 -4.4 0zM1325 241a3.2 3.2 0 1 1 6.5 0a3.2 3.2 0 1 1 -6.5 0zM1334 251a8 11 0 1 1 17 0a8 11 0 1 1 -17 0zM1341 244a2.2 2.2 0 1 1 4.3 0a2.2 2.2 0 1 1 -4.3 0zM1342 244a3.8 3.8 0 1 1 7.6 0a3.8 3.8 0 1 1 -7.6 0zM1336 258a12 17 0 1 1 23 0a12 17 0 1 1 -23 0zM1343 249a4.3 4.3 0 1 1 8.6 0a4.3 4.3 0 1 1 -8.6 0zM1344 243a2.7 2.7 0 1 1 5.3 0a2.7 2.7 0 1 1 -5.3 0zM1342 254a12 13 0 1 1 24 0a12 13 0 1 1 -24 0zM1353 247a3.3 3.3 0 1 1 6.6 0a3.3 3.3 0 1 1 -6.6 0zM1350 244a2.3 2.3 0 1 1 4.6 0a2.3 2.3 0 1 1 -4.6 0zM1349 259a14 14 0 1 1 28 0a14 14 0 1 1 -28 0zM1357 247a2.2 2.2 0 1 1 4.3 0a2.2 2.2 0 1 1 -4.3 0zM1370 246a3.2 3.2 0 1 1 6.5 0a3.2 3.2 0 1 1 -6.5 0zM1360 256a11 10 0 1 1 21 0a11 10 0 1 1 -21 0zM1363 249a2.3 2.3 0 1 1 4.5 0a2.3 2.3 0 1 1 -4.5 0zM1364 247a2.1 2.1 0 1 1 4.2 0a2.1 2.1 0 1 1 -4.2 0zM1366 255a10 11 0 1 1 21 0a10 11 0 1 1 -21 0zM1374 246a3.8 3.8 0 1 1 7.5 0a3.8 3.8 0 1 1 -7.5 0zM1365 245a3.8 3.8 0 1 1 7.6 0a3.8 3.8 0 1 1 -7.6 0zM1374 251a7 9 0 1 1 15 0a7 9 0 1 1 -15 0zM1374 245a2.3 2.3 0 1 1 4.7 0a2.3 2.3 0 1 1 -4.7 0zM1381 243a2.4 2.4 0 1 1 4.7 0a2.4 2.4 0 1 1 -4.7 0zM1380 259a10 16 0 1 1 21 0a10 16 0 1 1 -21 0zM1384 247a4.1 4.1 0 1 1 8.2 0a4.1 4.1 0 1 1 -8.2 0zM1386 248a4.4 4.4 0 1 1 8.7 0a4.4 4.4 0 1 1 -8.7 0zM1392 253a8 10 0 1 1 16 0a8 10 0 1 1 -16 0zM1403 244a4.3 4.3 0 1 1 8.6 0a4.3 4.3 0 1 1 -8.6 0zM1403 244a2.1 2.1 0 1 1 4.3 0a2.1 2.1 0 1 1 -4.3 0zM1392 260a16 15 0 1 1 32 0a16 15 0 1 1 -32 0zM1409 250a3.3 3.3 0 1 1 6.7 0a3.3 3.3 0 1 1 -6.7 0zM1391 250a3.3 3.3 0 1 1 6.5 0a3.3 3.3 0 1 1 -6.5 0zM1404 261a9 10 0 1 1 18 0a9 10 0 1 1 -18 0zM1411 252a4.2 4.2 0 1 1 8.4 0a4.2 4.2 0 1 1 -8.4 0zM1416 255a3.6 3.6 0 1 1 7.2 0a3.6 3.6 0 1 1 -7.2 0zM1409 267a11 14 0 1 1 21 0a11 14 0 1 1 -21 0zM1419 257a3.3 3.3 0 1 1 6.6 0a3.3 3.3 0 1 1 -6.6 0zM1416 253a2.7 2.7 0 1 1 5.4 0a2.7 2.7 0 1 1 -5.4 0zM1417 273a10 14 0 1 1 19 0a10 14 0 1 1 -19 0zM1424 263a3.2 3.2 0 1 1 6.3 0a3.2 3.2 0 1 1 -6.3 0zM1425 264a2.3 2.3 0 1 1 4.6 0a2.3 2.3 0 1 1 -4.6 0zM1424 271a8 10 0 1 1 17 0a8 10 0 1 1 -17 0zM1421 264a4.1 4.1 0 1 1 8.2 0a4.1 4.1 0 1 1 -8.2 0zM1431 264a3.6 3.6 0 1 1 7.3 0a3.6 3.6 0 1 1 -7.3 0zM1427 282a12 15 0 1 1 23 0a12 15 0 1 1 -23 0zM1435 273a2.6 2.6 0 1 1 5.2 0a2.6 2.6 0 1 1 -5.2 0zM1429 272a3.0 3.0 0 1 1 5.9 0a3.0 3.0 0 1 1 -5.9 0zM1441 286a6 9 0 1 1 12 0a6 9 0 1 1 -12 0zM1445 279a2.7 2.7 0 1 1 5.4 0a2.7 2.7 0 1 1 -5.4 0zM1449 280a3.9 3.9 0 1 1 7.9 0a3.9 3.9 0 1 1 -7.9 0zM1445 291a8 8 0 1 1 16 0a8 8 0 1 1 -16 0zM1447 285a3.8 3.8 0 1 1 7.7 0a3.8 3.8 0 1 1 -7.7 0zM1442 286a4.4 4.4 0 1 1 8.8 0a4.4 4.4 0 1 1 -8.8 0zM1455 298a7 9 0 1 1 14 0a7 9 0 1 1 -14 0zM1460 290a4.1 4.1 0 1 1 8.1 0a4.1 4.1 0 1 1 -8.1 0zM1459 291a3.9 3.9 0 1 1 7.7 0a3.9 3.9 0 1 1 -7.7 0zM1461 307a11 13 0 1 1 22 0a11 13 0 1 1 -22 0zM1462 295a2.0 2.0 0 1 1 4.0 0a2.0 2.0 0 1 1 -4.0 0zM1475 296a3.2 3.2 0 1 1 6.5 0a3.2 3.2 0 1 1 -6.5 0zM1472 311a10 15 0 1 1 21 0a10 15 0 1 1 -21 0zM1482 301a3.1 3.1 0 1 1 6.3 0a3.1 3.1 0 1 1 -6.3 0zM1479 299a2.7 2.7 0 1 1 5.5 0a2.7 2.7 0 1 1 -5.5 0zM1480 311a10 12 0 1 1 20 0a10 12 0 1 1 -20 0zM1494 302a3.1 3.1 0 1 1 6.2 0a3.1 3.1 0 1 1 -6.2 0zM1481 302a2.4 2.4 0 1 1 4.7 0a2.4 2.4 0 1 1 -4.7 0zM1489 306a9 15 0 1 1 18 0a9 15 0 1 1 -18 0zM1500 292a4.4 4.4 0 1 1 8.8 0a4.4 4.4 0 1 1 -8.8 0zM1489 295a4.3 4.3 0 1 1 8.6 0a4.3 4.3 0 1 1 -8.6 0zM1497 296a7 8 0 1 1 14 0a7 8 0 1 1 -14 0zM1503 290a4.5 4.5 0 1 1 9.0 0a4.5 4.5 0 1 1 -9.0 0zM1500 290a3.7 3.7 0 1 1 7.4 0a3.7 3.7 0 1 1 -7.4 0zM1502 292a9 10 0 1 1 19 0a9 10 0 1 1 -19 0zM1512 284a2.2 2.2 0 1 1 4.5 0a2.2 2.2 0 1 1 -4.5 0zM1505 285a3.4 3.4 0 1 1 6.8 0a3.4 3.4 0 1 1 -6.8 0zM1504 286a15 16 0 1 1 31 0a15 16 0 1 1 -31 0zM1520 271a2.9 2.9 0 1 1 5.7 0a2.9 2.9 0 1 1 -5.7 0zM1518 272a2.4 2.4 0 1 1 4.9 0a2.4 2.4 0 1 1 -4.9 0zM1511 278a15 17 0 1 1 31 0a15 17 0 1 1 -31 0zM1534 264a4.1 4.1 0 1 1 8.1 0a4.1 4.1 0 1 1 -8.1 0zM1538 263a3.1 3.1 0 1 1 6.1 0a3.1 3.1 0 1 1 -6.1 0zM1524 267a9 11 0 1 1 17 0a9 11 0 1 1 -17 0zM1523 258a3.5 3.5 0 1 1 7.0 0a3.5 3.5 0 1 1 -7.0 0zM1526 257a3.6 3.6 0 1 1 7.2 0a3.6 3.6 0 1 1 -7.2 0zM1527 264a11 11 0 1 1 21 0a11 11 0 1 1 -21 0zM1523 257a4.1 4.1 0 1 1 8.2 0a4.1 4.1 0 1 1 -8.2 0zM1537 255a2.5 2.5 0 1 1 5.0 0a2.5 2.5 0 1 1 -5.0 0zM1536 259a10 14 0 1 1 19 0a10 14 0 1 1 -19 0zM1552 248a3.0 3.0 0 1 1 6.1 0a3.0 3.0 0 1 1 -6.1 0zM1534 251a3.9 3.9 0 1 1 7.8 0a3.9 3.9 0 1 1 -7.8 0zM1545 252a6 9 0 1 1 13 0a6 9 0 1 1 -13 0zM1550 244a2.2 2.2 0 1 1 4.3 0a2.2 2.2 0 1 1 -4.3 0zM1542 244a2.8 2.8 0 1 1 5.6 0a2.8 2.8 0 1 1 -5.6 0zM1552 243a8 10 0 1 1 16 0a8 10 0 1 1 -16 0zM1564 235a2.9 2.9 0 1 1 5.7 0a2.9 2.9 0 1 1 -5.7 0zM1557 236a2.1 2.1 0 1 1 4.3 0a2.1 2.1 0 1 1 -4.3 0zM1558 242a13 13 0 1 1 25 0a13 13 0 1 1 -25 0zM1560 234a4.3 4.3 0 1 1 8.7 0a4.3 4.3 0 1 1 -8.7 0zM1576 233a4.2 4.2 0 1 1 8.5 0a4.2 4.2 0 1 1 -8.5 0zM1572 237a9 13 0 1 1 18 0a9 13 0 1 1 -18 0zM1586 229a3.0 3.0 0 1 1 5.9 0a3.0 3.0 0 1 1 -5.9 0zM1582 229a2.8 2.8 0 1 1 5.5 0a2.8 2.8 0 1 1 -5.5 0zM1580 237a11 11 0 1 1 22 0a11 11 0 1 1 -22 0zM1583 230a4.4 4.4 0 1 1 8.9 0a4.4 4.4 0 1 1 -8.9 0zM1584 228a2.3 2.3 0 1 1 4.6 0a2.3 2.3 0 1 1 -4.6 0zM1590 237a9 9 0 1 1 18 0a9 9 0 1 1 -18 0zM1602 231a2.6 2.6 0 1 1 5.2 0a2.6 2.6 0 1 1 -5.2 0zM1591 231a2.6 2.6 0 1 1 5.2 0a2.6 2.6 0 1 1 -5.2 0zM1594 244a11 12 0 1 1 21 0a11 12 0 1 1 -21 0zM1592 236a4.1 4.1 0 1 1 8.2 0a4.1 4.1 0 1 1 -8.2 0zM1592 235a4.1 4.1 0 1 1 8.2 0a4.1 4.1 0 1 1 -8.2 0zM1607 245a7 10 0 1 1 14 0a7 10 0 1 1 -14 0zM1616 238a4.4 4.4 0 1 1 8.8 0a4.4 4.4 0 1 1 -8.8 0zM1611 238a3.1 3.1 0 1 1 6.3 0a3.1 3.1 0 1 1 -6.3 0zM1609 253a11 17 0 1 1 21 0a11 17 0 1 1 -21 0zM1614 242a3.5 3.5 0 1 1 7.0 0a3.5 3.5 0 1 1 -7.0 0zM1612 238a2.3 2.3 0 1 1 4.6 0a2.3 2.3 0 1 1 -4.6 0zM1618 257a10 14 0 1 1 19 0a10 14 0 1 1 -19 0zM1628 246a2.8 2.8 0 1 1 5.6 0a2.8 2.8 0 1 1 -5.6 0zM1623 249a2.4 2.4 0 1 1 4.9 0a2.4 2.4 0 1 1 -4.9 0zM1629 263a9 9 0 1 1 19 0a9 9 0 1 1 -19 0zM1633 256a2.7 2.7 0 1 1 5.5 0a2.7 2.7 0 1 1 -5.5 0zM1627 257a2.6 2.6 0 1 1 5.1 0a2.6 2.6 0 1 1 -5.1 0zM1633 272a11 14 0 1 1 22 0a11 14 0 1 1 -22 0zM1646 259a4.2 4.2 0 1 1 8.3 0a4.2 4.2 0 1 1 -8.3 0zM1634 262a2.1 2.1 0 1 1 4.1 0a2.1 2.1 0 1 1 -4.1 0zM1642 263a11 13 0 1 1 21 0a11 13 0 1 1 -21 0zM1653 255a4.1 4.1 0 1 1 8.2 0a4.1 4.1 0 1 1 -8.2 0zM1647 253a2.5 2.5 0 1 1 4.9 0a2.5 2.5 0 1 1 -4.9 0zM1644 256a14 17 0 1 1 29 0a14 17 0 1 1 -29 0zM1643 245a2.5 2.5 0 1 1 5.0 0a2.5 2.5 0 1 1 -5.0 0zM1651 244a2.1 2.1 0 1 1 4.2 0a2.1 2.1 0 1 1 -4.2 0zM1656 248a10 15 0 1 1 20 0a10 15 0 1 1 -20 0zM1667 238a3.1 3.1 0 1 1 6.2 0a3.1 3.1 0 1 1 -6.2 0zM1667 237a2.0 2.0 0 1 1 4.0 0a2.0 2.0 0 1 1 -4.0 0zM1664 236a11 12 0 1 1 22 0a11 12 0 1 1 -22 0zM1675 229a2.6 2.6 0 1 1 5.2 0a2.6 2.6 0 1 1 -5.2 0zM1664 225a2.5 2.5 0 1 1 5.1 0a2.5 2.5 0 1 1 -5.1 0zM1676 229a10 16 0 1 1 20 0a10 16 0 1 1 -20 0zM1688 216a2.7 2.7 0 1 1 5.4 0a2.7 2.7 0 1 1 -5.4 0zM1675 215a3.1 3.1 0 1 1 6.1 0a3.1 3.1 0 1 1 -6.1 0zM1684 227a13 16 0 1 1 25 0a13 16 0 1 1 -25 0zM1692 218a3.7 3.7 0 1 1 7.5 0a3.7 3.7 0 1 1 -7.5 0zM1690 215a4.3 4.3 0 1 1 8.6 0a4.3 4.3 0 1 1 -8.6 0zM1692 226a10 16 0 1 1 20 0a10 16 0 1 1 -20 0zM1693 214a4.4 4.4 0 1 1 8.8 0a4.4 4.4 0 1 1 -8.8 0zM1702 214a2.6 2.6 0 1 1 5.2 0a2.6 2.6 0 1 1 -5.2 0zM1699 224a9 10 0 1 1 18 0a9 10 0 1 1 -18 0zM1698 215a3.7 3.7 0 1 1 7.4 0a3.7 3.7 0 1 1 -7.4 0zM1700 217a3.3 3.3 0 1 1 6.6 0a3.3 3.3 0 1 1 -6.6 0zM1703 239a13 15 0 1 1 25 0a13 15 0 1 1 -25 0zM1703 227a2.8 2.8 0 1 1 5.7 0a2.8 2.8 0 1 1 -5.7 0zM1719 227a3.9 3.9 0 1 1 7.8 0a3.9 3.9 0 1 1 -7.8 0zM1710 245a12 14 0 1 1 24 0a12 14 0 1 1 -24 0zM1727 237a2.7 2.7 0 1 1 5.4 0a2.7 2.7 0 1 1 -5.4 0zM1716 236a2.2 2.2 0 1 1 4.3 0a2.2 2.2 0 1 1 -4.3 0zM1720 245a9 9 0 1 1 17 0a9 9 0 1 1 -17 0zM1722 238a2.9 2.9 0 1 1 5.8 0a2.9 2.9 0 1 1 -5.8 0zM1720 240a2.0 2.0 0 1 1 4.1 0a2.0 2.0 0 1 1 -4.1 0zM1729 243a10 16 0 1 1 20 0a10 16 0 1 1 -20 0zM1737 234a3.2 3.2 0 1 1 6.4 0a3.2 3.2 0 1 1 -6.4 0zM1734 233a3.4 3.4 0 1 1 6.7 0a3.4 3.4 0 1 1 -6.7 0zM1730 240a14 17 0 1 1 28 0a14 17 0 1 1 -28 0zM1746 229a2.6 2.6 0 1 1 5.2 0a2.6 2.6 0 1 1 -5.2 0zM1730 231a3.9 3.9 0 1 1 7.9 0a3.9 3.9 0 1 1 -7.9 0zM1746 230a8 11 0 1 1 15 0a8 11 0 1 1 -15 0zM1757 223a4.0 4.0 0 1 1 7.9 0a4.0 4.0 0 1 1 -7.9 0zM1756 220a2.8 2.8 0 1 1 5.6 0a2.8 2.8 0 1 1 -5.6 0zM1749 229a12 14 0 1 1 23 0a12 14 0 1 1 -23 0zM1755 216a2.6 2.6 0 1 1 5.2 0a2.6 2.6 0 1 1 -5.2 0zM1746 217a3.6 3.6 0 1 1 7.1 0a3.6 3.6 0 1 1 -7.1 0zM1757 239a13 17 0 1 1 27 0a13 17 0 1 1 -27 0zM1767 229a2.7 2.7 0 1 1 5.5 0a2.7 2.7 0 1 1 -5.5 0zM1769 229a3.7 3.7 0 1 1 7.4 0a3.7 3.7 0 1 1 -7.4 0zM1765 236a11 10 0 1 1 23 0a11 10 0 1 1 -23 0zM1771 230a3.8 3.8 0 1 1 7.6 0a3.8 3.8 0 1 1 -7.6 0zM1761 228a4.1 4.1 0 1 1 8.3 0a4.1 4.1 0 1 1 -8.3 0zM1777 249a9 12 0 1 1 18 0a9 12 0 1 1 -18 0zM1781 240a3.1 3.1 0 1 1 6.2 0a3.1 3.1 0 1 1 -6.2 0zM1785 238a4.3 4.3 0 1 1 8.5 0a4.3 4.3 0 1 1 -8.5 0zM1783 252a8 11 0 1 1 17 0a8 11 0 1 1 -17 0zM1784 245a2.8 2.8 0 1 1 5.6 0a2.8 2.8 0 1 1 -5.6 0zM1787 242a4.3 4.3 0 1 1 8.5 0a4.3 4.3 0 1 1 -8.5 0zM1786 267a16 17 0 1 1 32 0a16 17 0 1 1 -32 0zM1784 252a3.5 3.5 0 1 1 7.0 0a3.5 3.5 0 1 1 -7.0 0zM1791 253a4.4 4.4 0 1 1 8.8 0a4.4 4.4 0 1 1 -8.8 0zM1800 265a10 13 0 1 1 21 0a10 13 0 1 1 -21 0zM1796 257a3.7 3.7 0 1 1 7.4 0a3.7 3.7 0 1 1 -7.4 0zM1805 258a3.7 3.7 0 1 1 7.3 0a3.7 3.7 0 1 1 -7.3 0zM1807 267a10 13 0 1 1 21 0a10 13 0 1 1 -21 0zM1813 259a2.5 2.5 0 1 1 4.9 0a2.5 2.5 0 1 1 -4.9 0zM1823 256a2.3 2.3 0 1 1 4.6 0a2.3 2.3 0 1 1 -4.6 0zM1820 265a7 10 0 1 1 14 0a7 10 0 1 1 -14 0zM1825 257a2.6 2.6 0 1 1 5.1 0a2.6 2.6 0 1 1 -5.1 0zM1825 259a3.3 3.3 0 1 1 6.6 0a3.3 3.3 0 1 1 -6.6 0zM1829 265a7 7 0 1 1 14 0a7 7 0 1 1 -14 0zM1837 259a3.8 3.8 0 1 1 7.6 0a3.8 3.8 0 1 1 -7.6 0zM1835 261a4.5 4.5 0 1 1 9.0 0a4.5 4.5 0 1 1 -9.0 0zM1837 261a8 8 0 1 1 16 0a8 8 0 1 1 -16 0zM1849 254a3.9 3.9 0 1 1 7.9 0a3.9 3.9 0 1 1 -7.9 0zM1837 254a2.1 2.1 0 1 1 4.3 0a2.1 2.1 0 1 1 -4.3 0zM1844 258a8 12 0 1 1 15 0a8 12 0 1 1 -15 0zM1846 248a3.1 3.1 0 1 1 6.1 0a3.1 3.1 0 1 1 -6.1 0zM1853 248a4.2 4.2 0 1 1 8.4 0a4.2 4.2 0 1 1 -8.4 0zM1845 254a15 14 0 1 1 30 0a15 14 0 1 1 -30 0zM1851 242a3.7 3.7 0 1 1 7.4 0a3.7 3.7 0 1 1 -7.4 0zM1867 246a2.9 2.9 0 1 1 5.9 0a2.9 2.9 0 1 1 -5.9 0zM1855 245a15 13 0 1 1 29 0a15 13 0 1 1 -29 0zM1854 235a4.0 4.0 0 1 1 8.0 0a4.0 4.0 0 1 1 -8.0 0zM1854 233a3.7 3.7 0 1 1 7.4 0a3.7 3.7 0 1 1 -7.4 0zM1868 241a8 11 0 1 1 15 0a8 11 0 1 1 -15 0zM1868 235a2.3 2.3 0 1 1 4.6 0a2.3 2.3 0 1 1 -4.6 0zM1877 234a3.4 3.4 0 1 1 6.8 0a3.4 3.4 0 1 1 -6.8 0zM1872 247a11 12 0 1 1 22 0a11 12 0 1 1 -22 0zM1880 237a4.0 4.0 0 1 1 8.0 0a4.0 4.0 0 1 1 -8.0 0zM1890 240a2.9 2.9 0 1 1 5.7 0a2.9 2.9 0 1 1 -5.7 0zM1877 248a12 14 0 1 1 23 0a12 14 0 1 1 -23 0zM1877 236a3.7 3.7 0 1 1 7.4 0a3.7 3.7 0 1 1 -7.4 0zM1884 237a2.4 2.4 0 1 1 4.8 0a2.4 2.4 0 1 1 -4.8 0zM1888 251a11 12 0 1 1 21 0a11 12 0 1 1 -21 0zM1891 244a4.2 4.2 0 1 1 8.5 0a4.2 4.2 0 1 1 -8.5 0zM1898 245a2.4 2.4 0 1 1 4.8 0a2.4 2.4 0 1 1 -4.8 0zM1896 256a10 12 0 1 1 20 0a10 12 0 1 1 -20 0zM1893 247a2.8 2.8 0 1 1 5.7 0a2.8 2.8 0 1 1 -5.7 0zM1892 248a4.5 4.5 0 1 1 8.9 0a4.5 4.5 0 1 1 -8.9 0zM1903 256a8 8 0 1 1 16 0a8 8 0 1 1 -16 0zM1908 251a3.4 3.4 0 1 1 6.8 0a3.4 3.4 0 1 1 -6.8 0zM1907 248a4.5 4.5 0 1 1 9.0 0a4.5 4.5 0 1 1 -9.0 0zM1905 266a12 15 0 1 1 23 0a12 15 0 1 1 -23 0zM1917 254a2.9 2.9 0 1 1 5.8 0a2.9 2.9 0 1 1 -5.8 0zM1907 253a4.2 4.2 0 1 1 8.4 0a4.2 4.2 0 1 1 -8.4 0z" fill="url(#treeR)"/>
</svg>
<div class="ly sc" style="background:conic-gradient(from 0deg at 1290px 144px,rgba(0,0,0,0) 110.0deg,rgba(120,76,28,.17) 117.2deg,rgba(120,76,28,.17) 120.8deg,rgba(0,0,0,0) 128.0deg,rgba(0,0,0,0) 141.0deg,rgba(110,70,24,.1) 146.6deg,rgba(110,70,24,.1) 149.4deg,rgba(0,0,0,0) 155.0deg,rgba(0,0,0,0) 159.0deg,rgba(190,110,40,.72) 168.6deg,rgba(190,110,40,.72) 173.4deg,rgba(0,0,0,0) 183.0deg);-webkit-mask-image:linear-gradient(180deg,transparent 190px,#000 250px,rgba(0,0,0,.7) 400px,rgba(0,0,0,.25) 600px);mask-image:linear-gradient(180deg,transparent 190px,#000 250px,rgba(0,0,0,.7) 400px,rgba(0,0,0,.25) 600px)"></div>
<div class="ly sc" style="background:radial-gradient(ellipse 100px 66px at 1338px 222px,rgba(255,222,170,.95) 0,rgba(255,190,120,.5) 55%,rgba(200,140,60,0) 100%)"></div>
<div class="ly sc" style="background:radial-gradient(ellipse 420px 90px at 1640px 300px,rgba(56,36,10,.28) 0,rgba(44,28,8,.14) 55%,rgba(40,24,6,0) 100%)"></div>
<div class="ly" style="background:linear-gradient(180deg,rgba(0,0,0,0) 470px,rgba(0,0,0,.92) 624px)"></div>
<div class="ly" style="left:0;top:352px;width:1290px;height:272px;background:#000"></div>
</div>
<!-- desktop icons -->
<div class="di" style="left:50px;top:27px"><svg viewBox="0 0 48 48"><defs><linearGradient id="ar" x1="0" y1="0" x2="0" y2="1"><stop offset="0" stop-color="#cacaca"/><stop offset=".45" stop-color="#909090"/><stop offset="1" stop-color="#3a3a3a"/></linearGradient></defs><rect x=".3" y="1" width="47.4" height="21" rx="7.5" fill="url(#ar)"/><g fill="#fff"><path d="M15.6 13.3h4.2l-.7 3.5h-4.2zM21.4 13.3h4.2l-.7 3.5h-4.2zM27.2 13.3h4.2l-.7 3.5h-4.2zM15.3 30.3h4.2l-.5 3.3h-4.2zM21.1 30.3h4.2l-.5 3.3h-4.2zM26.9 30.3h4.2l-.5 3.3h-4.2z"/><text x="24" y="29.2" font-family="'Liberation Sans',sans-serif" font-weight="bold" font-size="15.8" text-anchor="middle" textLength="41.5" lengthAdjust="spacingAndGlyphs" stroke="#fff" stroke-width="1.1" stroke-linejoin="miter" transform="skewX(-9) translate(4.6 0)">ARMA</text></g></svg><span>Arma 3</span></div>
<div class="di" style="left:180px;top:27px"><svg viewBox="0 0 48 48"><circle cx="24.2" cy="24.8" r="21.6" fill="#f162a9" stroke="#fff" stroke-width="2.4"/><text x="24.2" y="29.3" font-family="'Liberation Sans',sans-serif" font-weight="bold" font-size="14.5" text-anchor="middle" fill="#fff" stroke="#fff" stroke-width=".4">osu!</text></svg><span>OSU</span></div>
<div class="di" style="left:50px;top:127px"><svg viewBox="0 0 48 48"><rect y="1" width="48" height="48" fill="#1294f2"/><text x="25" y="34.6" font-family="'Liberation Sans',sans-serif" font-weight="bold" font-size="52" text-anchor="middle" fill="#fff">g</text></svg><span>Garry's Mod</span></div>
<div class="di" style="left:180px;top:127px"><svg viewBox="0 0 48 48"><defs><linearGradient id="pp" x1="0" y1="0" x2="0" y2="1"><stop offset="0" stop-color="#3cbccb"/><stop offset="1" stop-color="#1b93a6"/></linearGradient></defs><circle cx="24" cy="25" r="24" fill="url(#pp)"/><g fill="none" stroke="#fff" stroke-width="1.7"><ellipse cx="24" cy="25" rx="17.6" ry="7"/><ellipse cx="24" cy="25" rx="17.6" ry="7" transform="rotate(60 24 25)"/><ellipse cx="24" cy="25" rx="17.6" ry="7" transform="rotate(120 24 25)"/></g><g fill="#fff"><circle cx="24" cy="25" r="5.4"/><circle cx="12.3" cy="13.7" r="2.6"/><circle cx="38.4" cy="28.1" r="2.6"/><circle cx="18.4" cy="38.9" r="2.6"/></g></svg><span>PortProton</span></div>
<div class="di" style="left:52px;top:227px"><svg viewBox="0 0 48 48" style="margin-left:39px"><rect x="5" y="5" width="38.5" height="39.5" rx="6.5" fill="#f5f5f3"/><g fill="#3d7249"><g id="gp"><path d="M20.2 13.2a3.6 3.6 0 0 1 7 0q-3.5-1.7-7 0z"/><path d="M21.3 17.6a2.6 2.6 0 0 1 5 0q-2.5-1.2-5 0z" transform="rotate(18 23.7 25.2)"/></g><use href="#gp" transform="rotate(36 23.7 25.2)"/><use href="#gp" transform="rotate(72 23.7 25.2)"/><use href="#gp" transform="rotate(108 23.7 25.2)"/><use href="#gp" transform="rotate(144 23.7 25.2)"/><use href="#gp" transform="rotate(180 23.7 25.2)"/><use href="#gp" transform="rotate(216 23.7 25.2)"/><use href="#gp" transform="rotate(252 23.7 25.2)"/><use href="#gp" transform="rotate(288 23.7 25.2)"/><use href="#gp" transform="rotate(324 23.7 25.2)"/><circle cx="23.7" cy="25.2" r="1.5"/></g><circle cx="23.7" cy="25.2" r="3.6" fill="none" stroke="#3d7249" stroke-width=".8" stroke-dasharray=".9 1.36" opacity=".7"/></svg><span>GPT4All</span></div>
<div class="di" style="left:181px;top:227px"><svg viewBox="0 0 48 48" style="margin-left:40px"><defs><radialGradient id="ql" cx=".5" cy=".25" r=".8"><stop offset="0" stop-color="#d23a20"/><stop offset=".45" stop-color="#9c1608"/><stop offset="1" stop-color="#4a0603"/></radialGradient><clipPath id="qc"><path d="M24 24.7L33 5h15v43H0V5h15z"/></clipPath></defs><circle cx="23.6" cy="24.7" r="21.7" fill="url(#ql)" stroke="#fff" stroke-width="1.7"/><path clip-path="url(#qc)" fill-rule="evenodd" fill="#fff" d="M7.2 24.7a16.4 16.4 0 1 0 32.8 0a16.4 16.4 0 1 0-32.8 0zM9.2 23a14.4 14.4 0 1 0 28.8 0a14.4 14.4 0 1 0-28.8 0z"/><path d="M23.6 28.5l1.8 8v10.2a22 22 0 0 1-3.6 0V36.5z" fill="#fff"/></svg><span>Quake Live</span></div>
<div class="di" style="left:50px;top:327px"><svg viewBox="0 0 48 48"><defs><linearGradient id="gv" x1="0" y1="0" x2="1" y2="1"><stop offset="0" stop-color="#a8d888"/><stop offset=".4" stop-color="#4c9a2c"/><stop offset="1" stop-color="#1f6410"/></linearGradient></defs><g font-family="'Liberation Serif','DejaVu Serif',serif" font-weight="bold" font-size="51" text-anchor="middle" stroke-linejoin="miter"><text x="24.2" y="42.7" textLength="42" lengthAdjust="spacingAndGlyphs" fill="#000" stroke="#151515" stroke-width="5.2">V</text><text x="24.2" y="42.7" textLength="42" lengthAdjust="spacingAndGlyphs" fill="#fff" stroke="#fff" stroke-width="3.8">V</text><text x="24.2" y="42.7" textLength="42" lengthAdjust="spacingAndGlyphs" fill="url(#gv)" stroke="#16300c" stroke-width=".9">V</text></g></svg><span>Grand Theft Auto<br>V</span></div>
<div class="di" style="left:180px;top:327px"><svg viewBox="0 0 48 48"><defs><linearGradient id="st" x1="0" y1="0" x2="0" y2="1"><stop offset="0" stop-color="#2c323b"/><stop offset="1" stop-color="#1b1f26"/></linearGradient><clipPath id="stc"><rect x="3.8" y="4.4" width="41.6" height="40.8" rx="9.5"/></clipPath></defs><rect x="3.8" y="4.4" width="41.6" height="40.8" rx="9.5" fill="url(#st)"/><g clip-path="url(#stc)"><path d="M3 23.2l13 5.3 9-9.5 6 7.5-9 5.5-1.5 4.5-6-1L3 30z" fill="#f0f0f0"/><circle cx="30.5" cy="19.8" r="7" fill="#f4f4f4"/><circle cx="30.5" cy="19.8" r="4.5" fill="#ececee" stroke="#2a2e36" stroke-width="1"/><circle cx="17.3" cy="32.2" r="4.9" fill="#f0f0f0"/><path d="M14 34.2a3.5 3.5 0 1 0 2.2-5.3" fill="none" stroke="#555a63" stroke-width=".9"/></g></svg><span>Steam</span></div>
<div class="di" style="left:51px;top:427px"><svg viewBox="0 0 48 48" style="margin-left:40px"><rect y="1" width="48" height="48" fill="#000"/><g fill="#fff"><path d="M21 3.4h6.2l.3 26L24.1 47.5 20.7 29.5z"/><path d="M11.4 6.9h6.9l-.3 11.9h2.7v3h-2.7l.2 8-.4 10.3-4.6-7.4-3.3-3.5 2.6-4.4z"/><path d="M36.8 6.9h-6.9l.3 11.9h-2.7v3h2.7l-.2 8 .4 10.3 4.6-7.4 3.3-3.5-2.6-4.4z"/></g></svg><span>Hell Let Loose</span></div>
<div class="di" style="left:181px;top:427px"><svg viewBox="0 0 48 48" style="margin-left:40px"><defs><pattern id="tl" width="7" height="5" patternUnits="userSpaceOnUse" patternTransform="rotate(-24)"><rect width="7" height="5" fill="#8e4326"/><rect width="7" height="1.6" fill="#6e2f1a"/></pattern></defs><rect y="1" width="48" height="48" fill="url(#tl)"/><g fill="#e8323a"><path d="M7 35l6.5-2.5 6.5 2v3.5l-6 4-7-4z"/><path d="M28.5 33.5l6.5-2.5 6.5 2.5v3.5l-6 3.7-7-4z"/><path d="M19 26.5l4-2 3.5 1.5v2.5l-3.5 2.3-4-2.3z"/></g><g fill="#b01c24"><path d="M7 38l7 3.5 6-3.5v1.5l-6 3.5-7-4zM28.5 37l7 3.5 6-3.5v1.5l-6 3.5-7-4z"/></g><g fill="#2ec22e"><path d="M1 21l4-1.5 3 1 3-2 2 3 1 5 -1 5-4 .5-2-3.5-3-.5-3-4z"/><path d="M14 13l3-3 4 1 2-3 1 4 4-3 4 1-2 4-4 2-2 5 2 3-3 4-3-2 1-5-3-2-4-3z"/><path d="M27 20l3-2 3 1 2-4 1 5 4-4 5 0 1 3-4 3-3 4-2 4-4 1-2-3-3-3z"/></g><g fill="#1c8a1c"><path d="M5 25l3 1 1 4-2 .5zM20 18l3 1 0 5-2-1zM32 24l3 1 1 4-3 1z"/></g></svg><span>TLauncher</span></div>
<div class="di" style="left:50px;top:527px"><svg viewBox="0 0 48 48"><g fill="#fff"><path d="M31.4 1.7l1.7 5 .9 17.5 5.6 1.3v2.6l-5.7 1.3-.6 7.8h-2.8l-.7-7.8-4-1.3v-2.6l4.2-1.3.5-17.5z"/><path d="M18.9 15.8l2 2.5.4 5.8 3.8 1v2.6l-3.9.8-.3 20.4h-3.6l-.5-20.4-7.4-.8v-2.6l7.5-1 .3-5.8z"/></g></svg><span>Hunt: Showdown<br>1896</span></div>
<div class="di" style="left:50px;top:627px"><svg viewBox="0 0 48 48"><defs><linearGradient id="dc" x1="0" y1="0" x2="0" y2="1"><stop offset="0" stop-color="#f7f7f7"/><stop offset="1" stop-color="#e6e6e6"/></linearGradient><linearGradient id="dcf" x1="0" y1="1" x2="1" y2="0"><stop offset="0" stop-color="#fdfdfd"/><stop offset=".5" stop-color="#ededed"/></linearGradient></defs><path d="M6.8 3.2a1.5 1.5 0 0 1 1.5-1.5h20.1l12.8 12.7v31a1.5 1.5 0 0 1-1.5 1.5h-31.4a1.5 1.5 0 0 1-1.5-1.5z" fill="url(#dc)"/><path d="M28.4 15.4l12.8 1v-2z" fill="#d4d4d4"/><path d="M28.4 1.7l12.8 12.7h-11.3a1.5 1.5 0 0 1-1.5-1.5z" fill="url(#dcf)"/><g stroke="#b2b2b2" stroke-width="1.2"><path d="M13.4 22.5h21M13.4 25.55h21M13.4 28.6h21M13.4 31.65h21M13.4 34.7h21M13.4 37.75h11.4"/></g></svg><span>key.txt</span></div>
<div class="di" style="left:50px;top:727px"><svg viewBox="0 0 48 48"><defs><linearGradient id="kr" x1="0" y1="0" x2="0" y2="1"><stop offset="0" stop-color="#d74bd6"/><stop offset=".5" stop-color="#b43ac4"/><stop offset="1" stop-color="#962eb6"/></linearGradient></defs><rect x="3.4" y="4.2" width="41.4" height="41.6" rx="11" fill="url(#kr)"/><path d="M24 8.7c8.3 0 15 6.3 15 14.3 0 3.8-2.3 5.8-5 5.8h-2c-2.2 0-3.5 1.6-3.3 3.5.3 3-1.4 5.9-5.2 5.9-8 0-14.5-6.6-14.5-14.7S15.7 8.7 24 8.7z" fill="#fff"/><circle cx="24.3" cy="14.3" r="3.2" fill="#2f8ff0"/><circle cx="17.1" cy="18.2" r="2.1" fill="#22b04a"/><circle cx="31.9" cy="18" r="2" fill="#a42ce0"/><circle cx="15.1" cy="25.1" r="3" fill="#f99a16"/><circle cx="33.3" cy="26.9" r="1.5" fill="none" stroke="#a23cc0" stroke-width="1.2"/><circle cx="18.2" cy="31.9" r="2.1" fill="#f83838"/></svg><span>Krita</span></div>
<div class="di" style="left:50px;top:827px"><svg viewBox="0 0 48 48"><rect x="3.4" y="4.2" width="41.4" height="41.6" rx="11" fill="#fdbe3b"/><path d="M13.2 28.6l9.7-3.3 11.1 3.6v2.5l-10.3 4.4-10.5-4.4z" fill="#3a3a3c"/><path d="M13.2 28.6l9.7-3.3 11.1 3.6-10.3 4.4z" fill="#4c4c4e"/><ellipse cx="23.5" cy="28" rx="2.7" ry="1.3" fill="#c8c8c8"/><path d="M21.4 13.2h4.2l-.6 14.8c-.8.6-2.2.6-3 0z" fill="#3e3e40"/><ellipse cx="30.9" cy="28.7" rx="1.6" ry=".9" fill="#e2454a"/></svg><span>Lutris</span></div>
<div class="di" style="left:51px;top:927px"><svg viewBox="0 0 48 48" style="margin-left:40px"><defs><linearGradient id="oa" x1="0" y1="0" x2="1" y2="1"><stop offset="0" stop-color="#f6f2ec"/><stop offset=".5" stop-color="#e4dace"/><stop offset="1" stop-color="#c8b8a4"/></linearGradient></defs><path d="M9.5 33.5C-1 26 4 4 25 4.5S51 24 39 33" fill="none" stroke="#5a4828" stroke-width="5.5" transform="translate(.8 1.2)"/><path d="M9.5 33.5C-1 26 4 4 25 4.5S51 24 39 33" fill="none" stroke="url(#oa)" stroke-width="5"/><path d="M5 38.2l16-32 19.8 32-7.5 2.3-12-20.5-9.3 20.5z" fill="#5a4828" transform="translate(1 .8)"/><path d="M5 38.2l16-32 19.8 32-7.5 2.3-12-20.5-9.3 20.5z" fill="url(#oa)"/><path d="M21.2 26.1l5.6 7.2-6.1 6.7-3.9-6.7z" fill="#f0e8dc"/></svg><span>OpenArena</span></div>

<div id="win">
<div id="tb">sudo apt install gno ~
<div class="wb" style="left:10px;background:linear-gradient(#e02a36,#f25058);border:1px solid #a82028"></div>
<div class="wb" style="left:608px;background:linear-gradient(#e8772a,#f8b264);border:1px solid #b8601c"></div>
<div class="wb" style="left:632px;background:linear-gradient(#5aae34,#98d868);border:1px solid #4a8a28"></div>
</div>
<div id="mb"><span style="left:8px">File</span><span style="left:44px">Edit</span><span style="left:83px">View</span><span style="left:128px">Search</span><span style="left:184px">Terminal</span><span style="left:252px">Help</span></div>
<div id="term">Preparing to unpack .../gnome-software-common_46.0-1ubuntu2_all.deb ...
Unpacking gnome-software-common (46.0-1ubuntu2) ...
Selecting previously unselected package software-properties-gtk.
Preparing to unpack .../software-properties-gtk_2.3.1_all.deb ...
Unpacking software-properties-gtk (2.3.1) ...
Selecting previously unselected package gnome-software.
Preparing to unpack .../gnome-software_46.0-1ubuntu2_amd64.deb ...
Unpacking gnome-software (46.0-1ubuntu2) ...
Selecting previously unselected package gnome-software-plugin-flatpak.
Preparing to unpack .../gnome-software-plugin-flatpak_46.0-1ubuntu2_amd64.deb ..
.
Unpacking gnome-software-plugin-flatpak (46.0-1ubuntu2) ...
Setting up software-properties-gtk (2.3.1) ...
Setting up gnome-software-common (46.0-1ubuntu2) ...
Setting up apt-config-icons (1.0.2-1build6) ...
Setting up gnome-software (46.0-1ubuntu2) ...
Processing triggers for desktop-file-utils (0.27-2build1) ...
Processing triggers for hicolor-icon-theme (0.17-2) ...
Processing triggers for gnome-menus (3.36.0-1.1ubuntu3) ...
Processing triggers for mate-menus (1.26.1+mint1) ...
Processing triggers for libc-bin (2.39-0ubuntu8.3) ...
Processing triggers for man-db (2.12.0-4build2) ...
<span class="cur"></span>
<span class="pg">Progress: [ 68%]</span> [#######################################...................]</div>
<div id="sb"><i></i></div>
<div id="wbd"></div>
</div>
<div class="quote">In a world without walls and fences who needs Windows and Gates ?</div>

<div id="panel">
<div style="position:absolute;left:4px;top:1px;width:22px;height:36px;border-radius:3px;background:#5369c9"></div>
<div class="ws" style="left:3px;color:#fff">1</div><div class="ws" style="left:27px">2</div><div class="ws" style="left:51px">3</div><div class="ws" style="left:75px">4</div>
<div class="tux" style="position:absolute;left:794px;top:3px;width:34px;height:35px;border-radius:8px;background:linear-gradient(#f4f4f4,#ececec);box-shadow:0 0 0 1px rgba(0,0,0,.04)"><svg viewBox="0 0 28 28" style="left:3px;top:3px"><path d="M14 2.5c-2.8 0-4.2 2.2-4.2 5 0 2.3-.6 3.6-2 5.8-1.6 2.5-3 5.3-3 8 0 1.5.5 2.5 1.2 3h16c.7-.5 1.2-1.5 1.2-3 0-2.7-1.4-5.5-3-8-1.4-2.2-2-3.5-2-5.8 0-2.8-1.4-5-4.2-5z" fill="#26282c"/><path d="M14 9.5c-1.6 0-2.5 1.5-3.3 3.5-1 2.3-2.7 4.5-2.7 7.5 0 2.3 2 4 6 4s6-1.7 6-4c0-3-1.7-5.2-2.7-7.5-.8-2-1.7-3.5-3.3-3.5z" fill="#fff"/><path d="M11.4 8.3c1-.9 4.2-.9 5.2 0 .5.5-.8 1.6-2.6 1.6s-3.1-1.1-2.6-1.6z" fill="#f9a11b"/><circle cx="12.4" cy="6.5" r=".9" fill="#fff"/><circle cx="15.6" cy="6.5" r=".9" fill="#fff"/><path d="M3.5 22.5c1-1.8 3-2.8 5-2 1.6.7 2.7 2.4 2.4 3.9-.3 1.4-2.2 1.8-4.3 1.5-2.2-.3-4-1.8-3.1-3.4zM24.5 22.5c-1-1.8-3-2.8-5-2-1.6.7-2.7 2.4-2.4 3.9.3 1.4 2.2 1.8 4.3 1.5 2.2-.3 4-1.8 3.1-3.4z" fill="#f9a11b"/></svg></div>
<div style="position:absolute;left:843px;top:0;width:1px;height:40px;background:#b9b9b9"></div><div style="position:absolute;left:844px;top:0;width:1px;height:40px;background:#f8f8f8"></div>
<div class="ti" style="left:853px"><svg viewBox="0 0 28 28"><rect x=".5" y="1" width="27" height="26.5" rx="6.5" fill="#f9a825"/><path d="M3.5 6.5a2 2 0 0 1 2-2h17.5a2.5 2.5 0 0 1 2.5 2.5v3h-22z" fill="#fff"/><path d="M.5 9.5a3 3 0 0 1 3-3h5.5c1 0 1.6.4 2.2 1.1l.8.9c.5.6 1 .8 1.8.8h10.7a3 3 0 0 1 3 3v9.2a6 6 0 0 1-6 6h-15a6 6 0 0 1-6-6z" fill="#fec544"/><rect x="3" y="8" width="4.5" height=".9" rx=".4" fill="#f0a020"/></svg></div>
<div class="ti" style="left:893px"><svg viewBox="0 0 28 28"><rect x=".5" y=".8" width="27" height="26.8" rx="6.5" fill="#fdbf3c"/><path d="M14 4.2l2.3 1.3h3.2l2.6 3-.7 2 .6 2.2-1.5 6c-.5 1.8-1.3 2.6-2.6 3.5L14 24.8l-3.9-2.6c-1.3-.9-2.1-1.7-2.6-3.5l-1.5-6 .6-2.2-.7-2 2.6-3h3.2z" fill="#e8890c"/><path d="M14 7l2.2.8 2-.3 1.4 1.7-.6 1.6.8 1.5-1.4 1.7-1.2 1 .4 1.3-1.4 1.1.8 1-3 2-3-2 .8-1-1.4-1.1.4-1.3-1.2-1-1.4-1.7.8-1.5-.6-1.6 1.4-1.7 2 .3z" fill="#fff"/><path d="M10.8 11.2l2 .5-.5 1.3-1.8-.4zM17.2 11.2l-2 .5.5 1.3 1.8-.4zM13.3 12.5h1.4l.5 4-1.2.9-1.2-.9zM12 19l2-.8 2 .8-2 1.2z" fill="#e8890c"/></svg></div>
<div class="ti" style="left:933px"><svg viewBox="0 0 28 28"><defs><linearGradient id="sh" x1="0" y1="0" x2="1" y2="1"><stop offset="0" stop-color="#ff8445"/><stop offset="1" stop-color="#fb6a35"/></linearGradient></defs><rect x=".5" y=".8" width="27" height="26.8" rx="6.5" fill="url(#sh)"/><path d="M7.3 1.5c0 4.3 2.7 7.7 6.7 7.7s6.7-3.4 6.7-7.7" fill="none" stroke="#fff" stroke-width="1.2"/><text x="14" y="19.6" font-family="'Liberation Sans',sans-serif" font-size="5.6" font-weight="bold" text-anchor="middle" fill="#ffe0d0" letter-spacing=".5">SHOP</text></svg></div>
<div class="ti" style="left:973px;background:linear-gradient(#d6d6d6,#c4c4c4 60%,#b6b6b6);border-color:rgba(0,0,0,.1)"><svg viewBox="0 0 28 28"><defs><linearGradient id="tm" x1="0" y1="0" x2="0" y2="1"><stop offset="0" stop-color="#2f3338"/><stop offset="1" stop-color="#1d2024"/></linearGradient></defs><rect x=".5" y=".8" width="27" height="26.8" rx="6.5" fill="url(#tm)"/><path d="M5.3 8l4 2-4 2" fill="none" stroke="#fff" stroke-width="1.4"/><path d="M9.5 13.5h5.5" stroke="#fff" stroke-width="1.4"/></svg></div>
<div class="ti" style="left:1013px"><svg viewBox="0 0 28 28"><rect x=".5" y=".8" width="27" height="26.8" rx="6.5" fill="#5c68d8"/><path d="M8.7 8.6c1.5-.8 3-1.2 4-1.3l.4.9h1.8l.4-.9c1 .1 2.5.5 4 1.3 1.9 2.8 3 6 2.7 9.9-1.4 1.1-3 1.8-4.3 2.1l-.9-1.5c.6-.2 1.1-.5 1.6-.8l-.4-.3c-2.7 1.2-5.3 1.2-8 0l-.4.3c.5.3 1 .6 1.6.8l-.9 1.5c-1.3-.3-2.9-1-4.3-2.1-.3-3.9.8-7.1 2.7-9.9z" fill="#e4e6ff"/><ellipse cx="11.3" cy="15" rx="1.5" ry="1.7" fill="#5c68d8"/><ellipse cx="16.7" cy="15" rx="1.5" ry="1.7" fill="#5c68d8"/></svg></div>
<div class="ti" style="left:1053px"><svg viewBox="0 0 28 28"><defs><clipPath id="s2c"><rect x=".5" y=".8" width="27" height="26.8" rx="6.5"/></clipPath></defs><rect x=".5" y=".8" width="27" height="26.8" rx="6.5" fill="#25282e"/><g clip-path="url(#s2c)"><path d="M0 13.3l8.8 3.5 5.8-6.2 4 5-6 3.8-1 3-4-.7L0 18z" fill="#e8e8e8"/><circle cx="18.3" cy="11.2" r="4.7" fill="#f0f0f0"/><circle cx="18.3" cy="11.2" r="2.9" fill="#e0e0e2" stroke="#25282e" stroke-width=".8"/><circle cx="9.5" cy="19.3" r="3.3" fill="#e8e8e8"/><path d="M7.4 20.7a2.3 2.3 0 1 0 1.4-3.5" fill="none" stroke="#50545c" stroke-width=".7"/></g></svg></div>
<div class="ti" style="left:1093px"><svg viewBox="0 0 28 28"><defs><linearGradient id="tg" x1="0" y1="1" x2="1" y2="0"><stop offset="0" stop-color="#2cc0fa"/><stop offset="1" stop-color="#2a9df0"/></linearGradient></defs><rect x=".5" y=".8" width="27" height="26.8" rx="6.5" fill="url(#tg)"/><path d="M6.3 14.2l15.7-6.5-2.6 13-4.2-3.2-2.3 2.3-.3-3.7 6.5-6.3-8.3 5.3z" fill="#fff"/><path d="M12.6 16.1l.3 3.7 2.3-2.3z" fill="#c8e4f8"/></svg></div>
<!-- tray -->
<svg class="tray" style="left:1548px;width:200px" viewBox="0 0 200 40">
<path d="M6.3 12.5c2-1 4-1.6 5.5-1.7l.5 1.2h4.4l.5-1.2c1.5.1 3.5.7 5.5 1.7 2.5 3.8 4 8 3.6 13.2-1.9 1.5-4 2.4-5.7 2.8l-1.2-2c-2.7.9-7.1.9-9.8 0l-1.2 2c-1.7-.4-3.8-1.3-5.7-2.8-.4-5.2 1.1-9.4 3.6-13.2z" fill="#fafafa" stroke="#3a3a3a" stroke-width="1.3" stroke-linejoin="round"/><ellipse cx="10.8" cy="20.5" rx="1.5" ry="1.9" fill="none" stroke="#3a3a3a" stroke-width="1.1"/><ellipse cx="18.2" cy="20.5" rx="1.5" ry="1.9" fill="none" stroke="#3a3a3a" stroke-width="1.1"/><path d="M10.5 24.8c2.2 1.1 5.8 1.1 8 0" fill="none" stroke="#3a3a3a" stroke-width="1"/><circle cx="22.9" cy="12.7" r="3.6" fill="#f23c3c"/>
<g><rect x="37.8" y="10.2" width="18.5" height="18.6" rx="4" fill="#3a3c40"/><path d="M37.8 19l5.6 2.3 3.8-4 2.7 3.3-4 2.6-.7 2-2.7-.5-4.7-2z" fill="#d8d8d8"/><circle cx="49.8" cy="17.5" r="3.3" fill="#e4e4e4"/><circle cx="49.8" cy="17.5" r="1.9" fill="#d0d0d0" stroke="#3a3c40" stroke-width=".7"/><circle cx="43.8" cy="23.2" r="2.3" fill="#d8d8d8"/></g>
<circle cx="78.6" cy="19" r="10.4" fill="#2a9bd8"/><path d="M72.5 19.5l6-2.3-1 3z" fill="#fff"/><rect x="74.3" y="15.5" width="17" height="16" rx="3.5" fill="#f23a36"/><text x="83" y="28.3" font-family="'Liberation Sans',sans-serif" font-size="11.5" text-anchor="middle" fill="#fff">..8</text>
<path d="M113.7 24a7.7 7.7 0 1 0-3 3.3" fill="none" stroke="#3c3c3c" stroke-width="1.3"/><circle cx="106.8" cy="15.8" r="1.1" fill="#3c3c3c"/><path d="M105.3 18.5h1.9v5.3" fill="none" stroke="#3c3c3c" stroke-width="1.4"/><circle cx="113.2" cy="25.7" r="2" fill="#3c3c3c"/>
<path d="M126.5 25.5c1.5-1 2.2-2.3 2.2-4.5v-2.5c0-2.6 1.8-4.5 4.2-4.5.9 0 1.7.3 2.3.7M137.1 19.7v1.3c0 2.2.7 3.5 2.2 4.5z" fill="none" stroke="#3c3c3c" stroke-width="1.3" stroke-linejoin="round"/><path d="M126.5 25.5h12.8" stroke="#3c3c3c" stroke-width="1.3"/><path d="M131.5 27.6h2.8" stroke="#3c3c3c" stroke-width="1.3" stroke-linecap="round"/><circle cx="137" cy="16.3" r="2.7" fill="#3c3c3c"/>
<text x="147.2" y="25.4" font-family="'Liberation Sans',sans-serif" font-weight="bold" font-size="12" fill="#3c3c3c" text-anchor="middle">3</text>
<g><rect x="161.5" y="10.5" width="27" height="19" rx="1.5" fill="#f4f4f4"/><g fill="#c8343c"><rect x="161.5" y="10.5" width="27" height="1.5"/><rect x="161.5" y="13.4" width="27" height="1.5"/><rect x="161.5" y="16.3" width="27" height="1.5"/><rect x="161.5" y="19.2" width="27" height="1.5"/><rect x="161.5" y="22.1" width="27" height="1.5"/><rect x="161.5" y="25" width="27" height="1.5"/><rect x="161.5" y="27.9" width="27" height="1.6"/></g><rect x="161.5" y="10.5" width="12.5" height="10.2" fill="#3c3f7c"/><rect x="161.5" y="10.5" width="27" height="19" rx="1.5" fill="none" stroke="rgba(0,0,0,.18)" stroke-width=".6"/></g>
</svg>
<svg class="tray" style="left:1744px;width:48px" viewBox="0 0 48 40"><path d="M6.3 16.5l-3.3 3.8 3.3 3.8M15.2 16.5l3.3 3.8-3.3 3.8M4.2 20.3h13" fill="none" stroke="#6a6a6a" stroke-width="1.3"/><g fill="#3a3a3a"><ellipse cx="31" cy="26" rx="2.9" ry="2.3"/><ellipse cx="39.4" cy="24.3" rx="2.9" ry="2.3"/><path d="M32.6 26V14.8l9.7-2.6v12.1h-1.4v-8.5l-6.9 1.9V26z"/></g></svg>
<div id="clock">Tue, Aug 27, 00:40</div>
<div style="position:absolute;left:1909px;top:3px;width:8px;height:32px;background:rgba(255,255,255,.45);border-radius:2px 0 0 2px"></div>
</div>

</body></html>
